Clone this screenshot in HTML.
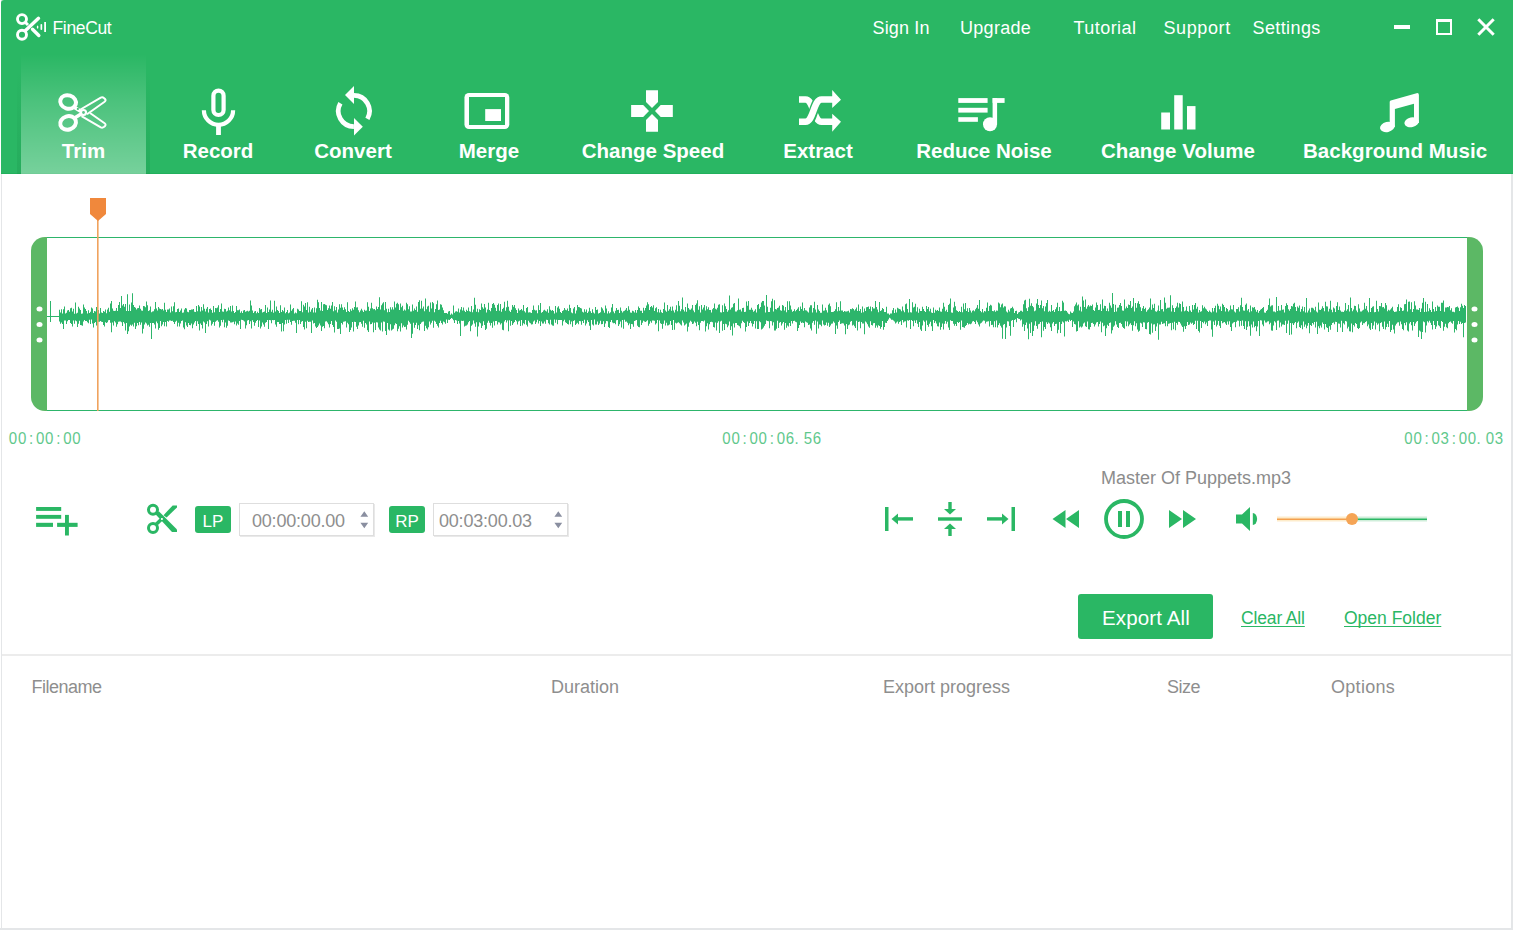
<!DOCTYPE html>
<html><head><meta charset="utf-8"><style>
*{box-sizing:border-box}
html,body{margin:0;padding:0}
body{width:1513px;height:930px;position:relative;overflow:hidden;background:#fff;font-family:"Liberation Sans",sans-serif}
.a{position:absolute}
.tx{white-space:nowrap}
.ts{font-size:15px;color:#5fc88c;line-height:16px;top:429px;white-space:nowrap;transform:scaleY(1.14);transform-origin:0 0}
svg{display:block}
</style></head><body>
<div class="a" style="left:1px;top:0;width:1px;height:930px;background:#e4e6e8"></div>
<div class="a" style="left:1511px;top:174px;width:2px;height:756px;background:#e4e6e8"></div>
<div class="a" style="left:0;top:928px;width:1513px;height:2px;background:#e4e6e8"></div>

<div class="a" style="left:1px;top:0;width:1512px;height:174px;background:#2ab764;border-top-left-radius:3px"></div>
<div class="a" style="left:1px;top:173px;width:1512px;height:1px;background:#22b05c"></div>
<div class="a" style="left:17px;top:70px;width:4px;height:104px;background:linear-gradient(180deg,rgba(0,80,30,0),rgba(0,80,30,.10))"></div>
<div class="a" style="left:146px;top:70px;width:4px;height:104px;background:linear-gradient(180deg,rgba(0,80,30,0),rgba(0,80,30,.10))"></div>
<div class="a" style="left:21px;top:54px;width:125px;height:120px;background:linear-gradient(180deg,rgba(255,255,255,0) 0%,rgba(255,255,255,.16) 40%,rgba(255,255,255,.36) 100%)"></div>

<!-- logo -->
<svg class="a" style="left:12px;top:10px" width="40" height="34" viewBox="0 0 40 34">
 <g fill="none" stroke="#fff" stroke-width="2.9">
  <circle cx="10" cy="9.1" r="4.5"/><circle cx="10" cy="24.8" r="4.5"/>
 </g>
 <g stroke="#fff" stroke-width="3.4" stroke-linecap="round" fill="none">
  <path d="M13.5 20.5L26.5 8.3"/><path d="M20.5 19.3L26.8 25.5"/>
 </g>
 <path d="M13.5 12.5L16 15" stroke="#fff" stroke-width="3" fill="none"/>
 <g fill="#fff"><ellipse cx="25.6" cy="17.1" rx="0.8" ry="1.7"/><rect x="28.5" y="14" width="1.7" height="6" rx=".8"/><rect x="32.2" y="12" width="1.8" height="10"/></g>
</svg>
<div class="a tx" style="left:52.5px;top:20.19px;font-size:17.5px;line-height:17.5px;color:#fff;letter-spacing:-0.35px;">FineCut</div>

<div class="a tx" style="left:872.5px;top:18.76px;font-size:18px;line-height:18px;color:#fff;letter-spacing:0.15px;">Sign In</div>
<div class="a tx" style="left:960px;top:18.76px;font-size:18px;line-height:18px;color:#fff;letter-spacing:0.3px;">Upgrade</div>
<div class="a tx" style="left:1073.5px;top:18.76px;font-size:18px;line-height:18px;color:#fff;letter-spacing:0.45px;">Tutorial</div>
<div class="a tx" style="left:1163.5px;top:18.76px;font-size:18px;line-height:18px;color:#fff;letter-spacing:0.6px;">Support</div>
<div class="a tx" style="left:1252.5px;top:18.76px;font-size:18px;line-height:18px;color:#fff;letter-spacing:0.4px;">Settings</div>

<!-- window controls -->
<div class="a" style="left:1394px;top:25px;width:16px;height:4px;background:#fff"></div>
<div class="a" style="left:1436px;top:19px;width:16px;height:16px;border:2px solid #fff;border-top-width:3px"></div>
<svg class="a" style="left:1476px;top:17px" width="20" height="20" viewBox="0 0 20 20"><path d="M2.3 2.3L17.7 17.7M17.7 2.3L2.3 17.7" stroke="#fff" stroke-width="3"/></svg>

<div class="a tx" style="left:21.0px;top:140.65px;font-size:20.5px;line-height:20.5px;color:#fff;font-weight:bold;width:125px;text-align:center;">Trim</div><div class="a tx" style="left:148.0px;top:140.65px;font-size:20.5px;line-height:20.5px;color:#fff;font-weight:bold;width:140px;text-align:center;">Record</div><div class="a tx" style="left:283.0px;top:140.65px;font-size:20.5px;line-height:20.5px;color:#fff;font-weight:bold;width:140px;text-align:center;">Convert</div><div class="a tx" style="left:419.0px;top:140.65px;font-size:20.5px;line-height:20.5px;color:#fff;font-weight:bold;width:140px;text-align:center;">Merge</div><div class="a tx" style="left:543.0px;top:140.65px;font-size:20.5px;line-height:20.5px;color:#fff;font-weight:bold;width:220px;text-align:center;">Change Speed</div><div class="a tx" style="left:748.0px;top:140.65px;font-size:20.5px;line-height:20.5px;color:#fff;font-weight:bold;width:140px;text-align:center;">Extract</div><div class="a tx" style="left:874.0px;top:140.65px;font-size:20.5px;line-height:20.5px;color:#fff;font-weight:bold;width:220px;text-align:center;">Reduce Noise</div><div class="a tx" style="left:1068.0px;top:140.65px;font-size:20.5px;line-height:20.5px;color:#fff;font-weight:bold;width:220px;text-align:center;letter-spacing:0.05px;">Change Volume</div><div class="a tx" style="left:1285.0px;top:140.65px;font-size:20.5px;line-height:20.5px;color:#fff;font-weight:bold;width:220px;text-align:center;letter-spacing:0.05px;">Background Music</div>

<!-- trim scissors -->
<svg class="a" style="left:52px;top:88px" width="60" height="48" viewBox="0 0 60 48">
 <g fill="none" stroke="#fff">
  <ellipse cx="16.1" cy="14" rx="8" ry="6.7" stroke-width="4" transform="rotate(18 16.1 14)"/>
  <ellipse cx="16.1" cy="34.9" rx="8" ry="6.7" stroke-width="4" transform="rotate(-18 16.1 34.9)"/>
  <path d="M22.5 19.5L31.5 25M22.5 30L31.5 24.5" stroke-width="3.6"/>
  <path d="M28.5 21.5L48.8 9.6Q50.5 8.8 52.2 10.2L53 11Q54.3 12.5 52.6 13.7L35 26.2" stroke-width="2" stroke-linejoin="round"/>
  <path d="M29.5 28.2L48.8 39.4Q50.5 40.2 52.2 38.8L53 38Q54.3 36.5 52.6 35.3L38 25" stroke-width="2" stroke-linejoin="round"/>
 </g>
 <circle cx="31.5" cy="24.5" r="3.6" fill="#fff"/>
 <circle cx="31.5" cy="24.5" r="1.4" fill="#5cc689"/>
 <rect x="24.9" y="20" width="1.9" height="1.9" fill="#4fc07e"/>
</svg>
<!-- mic -->
<svg class="a" style="left:195px;top:84px" width="50" height="56" viewBox="0 0 50 56">
 <g fill="none" stroke="#fff" stroke-width="4.2">
  <rect x="18.4" y="6.6" width="10.2" height="24.4" rx="5.1"/>
  <path d="M8.9 26.2A14.6 14.6 0 0 0 38.1 26.2"/>
 </g>
 <rect x="21.1" y="40" width="4.8" height="11" fill="#fff"/>
</svg>
<!-- convert -->
<svg class="a" style="left:330px;top:82px" width="50" height="58" viewBox="0 0 50 58">
 <g fill="none" stroke="#fff" stroke-width="4.7">
  <path d="M23.9 13.4A15.6 15.6 0 0 1 37.4 36.8"/>
  <path d="M23.9 44.6A15.6 15.6 0 0 1 10.4 21.2"/>
 </g>
 <path d="M24 4V22L15 13Z" fill="#fff"/>
 <path d="M24 36V53.5L32.8 44.7Z" fill="#fff"/>
</svg>
<!-- merge -->
<svg class="a" style="left:458px;top:86px" width="60" height="50" viewBox="0 0 60 50">
 <rect x="6.45" y="7" width="44.85" height="36" rx="4.5" fill="#fff"/>
 <rect x="11" y="11" width="36" height="28" fill="#2ab764"/>
 <rect x="27.2" y="23.1" width="15.8" height="11.9" fill="#fff"/>
</svg>
<!-- change speed -->
<svg class="a" style="left:626px;top:86px" width="52" height="50" viewBox="0 0 52 50">
 <g fill="#fff">
  <path d="M20 4.2H32V16L26 21.9L20 16Z"/>
  <path d="M20 45.7H32V33.9L26 28L20 33.9Z"/>
  <path d="M5.1 19V31H17.2L23 25L17.2 19Z"/>
  <path d="M46.8 19V31H34.7L29 25L34.7 19Z"/>
 </g>
</svg>
<!-- extract -->
<svg class="a" style="left:794px;top:86px" width="52" height="50" viewBox="0 0 52 50">
 <path d="M5 13.5H11.5C19.5 13.5 19.5 35.8 27.5 35.8H39" fill="none" stroke="#fff" stroke-width="6.6"/>
 <path d="M13 35.8C19.5 35.8 19.5 13.5 27.5 13.5" fill="none" stroke="#2ab764" stroke-width="9.5"/>
 <path d="M5 35.8H11.5C19.5 35.8 19.5 13.5 27.5 13.5H39" fill="none" stroke="#fff" stroke-width="6.6"/>
 <path d="M38.2 4L47 13.7L38.2 22Z M38.2 27.7L47 35.8L38.2 45.7Z" fill="#fff"/>
</svg>
<!-- reduce noise -->
<svg class="a" style="left:954px;top:92px" width="56" height="44" viewBox="0 0 56 44">
 <g fill="#fff">
  <rect x="4.3" y="6.1" width="29.3" height="4.8"/>
  <rect x="4.3" y="15.8" width="29.3" height="4.8"/>
  <rect x="4.3" y="25.2" width="19.6" height="4.6"/>
  <rect x="38.6" y="6.1" width="4.5" height="26.5"/>
  <rect x="38.6" y="6.1" width="12" height="4.8"/>
  <circle cx="36" cy="32.3" r="7"/>
 </g>
</svg>
<!-- change volume -->
<svg class="a" style="left:1156px;top:90px" width="46" height="44" viewBox="0 0 46 44">
 <g fill="#fff"><rect x="5.2" y="22.5" width="8.8" height="17"/><rect x="18.2" y="5.2" width="8.5" height="34.3"/><rect x="31" y="16.1" width="8.5" height="23.4"/></g>
</svg>
<!-- music -->
<svg class="a" style="left:1374px;top:88px" width="50" height="48" viewBox="0 0 50 48">
 <g fill="#fff">
  <path d="M15.7 14Q15.7 12.9 16.8 12.5L42.6 5.2Q44.9 4.7 44.9 7V35H40V15.7L20.9 21V39H15.7Z"/>
  <ellipse cx="13.3" cy="39" rx="7.4" ry="5" transform="rotate(-12 13.3 39)"/>
  <ellipse cx="37.6" cy="34.2" rx="7.3" ry="4.9" transform="rotate(-12 37.6 34.2)"/>
 </g>
</svg>

<!-- waveform area -->
<div class="a" style="left:46px;top:237px;width:1422px;height:174px;border-top:1px solid #2db56b;border-bottom:1px solid #2db56b"></div>
<div class="a" style="left:31px;top:237px;width:16px;height:174px;background:#5cb865;border-radius:14px 0 0 14px"></div>
<div class="a" style="left:1467px;top:237px;width:16px;height:174px;background:#5cb865;border-radius:0 14px 14px 0"></div>
<svg class="a" style="left:0;top:0" width="1513" height="930">
 <g fill="#fff">
  <ellipse cx="39.5" cy="309" rx="3" ry="2.5"/><ellipse cx="39.5" cy="324.5" rx="3" ry="2.5"/><ellipse cx="39.5" cy="340" rx="3" ry="2.5"/>
  <ellipse cx="1474.5" cy="309" rx="3" ry="2.5"/><ellipse cx="1474.5" cy="324.5" rx="3" ry="2.5"/><ellipse cx="1474.5" cy="340" rx="3" ry="2.5"/>
 </g>
 <path d="M50.5 301V322" stroke="#2db56b" stroke-width="1"/>
 <path d="M47 315.9H59L59 309.7L60 309.7L60 312.5L61 312.5L61 309.3L62 309.3L62 313.5L63 313.5L63 309.2L64 309.2L64 306.6L65 306.6L65 313.4L66 313.4L66 312.8L67 312.8L67 310.6L68 310.6L68 309.9L69 309.9L69 311.7L70 311.7L70 308.3L71 308.3L71 307.7L72 307.7L72 311.4L73 311.4L73 308.8L74 308.8L74 313.7L75 313.7L75 302.6L76 302.6L76 313.6L77 313.6L77 312.8L78 312.8L78 306.7L79 306.7L79 308.4L80 308.4L80 309.9L81 309.9L81 313.7L82 313.7L82 313.6L83 313.6L83 304.4L84 304.4L84 307.4L85 307.4L85 308.9L86 308.9L86 311.1L87 311.1L87 313.6L88 313.6L88 310.3L89 310.3L89 313.1L90 313.1L90 311.7L91 311.7L91 307.4L92 307.4L92 308.5L93 308.5L93 313.1L94 313.1L94 311.1L95 311.1L95 311.4L96 311.4L96 307.1L97 307.1L97 305.6L98 305.6L98 309.9L99 309.9L99 313.4L100 313.4L100 308.0L101 308.0L101 312.4L102 312.4L102 313.1L103 313.1L103 311.1L104 311.1L104 311.8L105 311.8L105 309.4L106 309.4L106 313.3L107 313.3L107 309.6L108 309.6L108 307.7L109 307.7L109 311.7L110 311.7L110 303.5L111 303.5L111 301.0L112 301.0L112 308.4L113 308.4L113 310.7L114 310.7L114 311.0L115 311.0L115 310.7L116 310.7L116 307.9L117 307.9L117 311.0L118 311.0L118 305.0L119 305.0L119 302.0L120 302.0L120 308.1L121 308.1L121 296.1L122 296.1L122 305.5L123 305.5L123 304.0L124 304.0L124 306.8L125 306.8L125 304.1L126 304.1L126 311.0L127 311.0L127 294.2L128 294.2L128 310.9L129 310.9L129 304.4L130 304.4L130 311.0L131 311.0L131 302.6L132 302.6L132 293.3L133 293.3L133 304.9L134 304.9L134 306.9L135 306.9L135 307.8L136 307.8L136 309.5L137 309.5L137 308.3L138 308.3L138 308.1L139 308.1L139 305.4L140 305.4L140 308.8L141 308.8L141 310.4L142 310.4L142 310.8L143 310.8L143 305.9L144 305.9L144 306.3L145 306.3L145 307.2L146 307.2L146 301.4L147 301.4L147 305.2L148 305.2L148 310.9L149 310.9L149 310.2L150 310.2L150 306.4L151 306.4L151 312.2L152 312.2L152 311.4L153 311.4L153 311.3L154 311.3L154 309.2L155 309.2L155 302.1L156 302.1L156 308.4L157 308.4L157 310.5L158 310.5L158 307.1L159 307.1L159 308.6L160 308.6L160 308.9L161 308.9L161 309.6L162 309.6L162 309.1L163 309.1L163 310.4L164 310.4L164 302.8L165 302.8L165 309.7L166 309.7L166 311.9L167 311.9L167 309.5L168 309.5L168 309.5L169 309.5L169 308.4L170 308.4L170 312.5L171 312.5L171 306.6L172 306.6L172 311.3L173 311.3L173 306.3L174 306.3L174 302.2L175 302.2L175 312.2L176 312.2L176 312.0L177 312.0L177 308.9L178 308.9L178 308.6L179 308.6L179 312.0L180 312.0L180 310.6L181 310.6L181 308.4L182 308.4L182 312.8L183 312.8L183 312.6L184 312.6L184 309.4L185 309.4L185 307.9L186 307.9L186 308.6L187 308.6L187 311.7L188 311.7L188 312.2L189 312.2L189 310.1L190 310.1L190 309.9L191 309.9L191 309.4L192 309.4L192 309.5L193 309.5L193 309.0L194 309.0L194 311.7L195 311.7L195 311.9L196 311.9L196 305.9L197 305.9L197 311.3L198 311.3L198 304.9L199 304.9L199 306.4L200 306.4L200 311.6L201 311.6L201 307.0L202 307.0L202 310.4L203 310.4L203 304.2L204 304.2L204 308.8L205 308.8L205 311.6L206 311.6L206 308.8L207 308.8L207 307.1L208 307.1L208 312.6L209 312.6L209 309.0L210 309.0L210 308.5L211 308.5L211 310.1L212 310.1L212 312.8L213 312.8L213 306.0L214 306.0L214 312.3L215 312.3L215 307.9L216 307.9L216 308.3L217 308.3L217 307.4L218 307.4L218 305.2L219 305.2L219 311.9L220 311.9L220 308.9L221 308.9L221 303.5L222 303.5L222 311.6L223 311.6L223 311.8L224 311.8L224 308.8L225 308.8L225 309.1L226 309.1L226 311.5L227 311.5L227 310.7L228 310.7L228 307.5L229 307.5L229 310.2L230 310.2L230 306.0L231 306.0L231 311.5L232 311.5L232 305.6L233 305.6L233 311.0L234 311.0L234 313.1L235 313.1L235 311.9L236 311.9L236 305.9L237 305.9L237 310.2L238 310.2L238 310.3L239 310.3L239 309.5L240 309.5L240 312.7L241 312.7L241 311.3L242 311.3L242 313.0L243 313.0L243 310.5L244 310.5L244 310.0L245 310.0L245 311.8L246 311.8L246 311.3L247 311.3L247 310.8L248 310.8L248 311.6L249 311.6L249 310.8L250 310.8L250 300.5L251 300.5L251 305.4L252 305.4L252 310.6L253 310.6L253 313.0L254 313.0L254 311.6L255 311.6L255 311.0L256 311.0L256 313.2L257 313.2L257 311.7L258 311.7L258 313.1L259 313.1L259 307.9L260 307.9L260 309.5L261 309.5L261 308.9L262 308.9L262 312.4L263 312.4L263 312.0L264 312.0L264 311.6L265 311.6L265 305.1L266 305.1L266 312.9L267 312.9L267 307.4L268 307.4L268 312.0L269 312.0L269 309.6L270 309.6L270 300.6L271 300.6L271 311.8L272 311.8L272 309.8L273 309.8L273 312.7L274 312.7L274 300.8L275 300.8L275 311.4L276 311.4L276 306.4L277 306.4L277 309.9L278 309.9L278 310.9L279 310.9L279 313.0L280 313.0L280 305.3L281 305.3L281 311.9L282 311.9L282 310.0L283 310.0L283 311.3L284 311.3L284 307.5L285 307.5L285 313.2L286 313.2L286 312.0L287 312.0L287 309.9L288 309.9L288 313.2L289 313.2L289 312.4L290 312.4L290 304.5L291 304.5L291 310.8L292 310.8L292 309.3L293 309.3L293 308.0L294 308.0L294 313.4L295 313.4L295 312.6L296 312.6L296 313.3L297 313.3L297 308.8L298 308.8L298 309.6L299 309.6L299 311.0L300 311.0L300 310.9L301 310.9L301 301.2L302 301.2L302 312.2L303 312.2L303 304.7L304 304.7L304 306.6L305 306.6L305 302.9L306 302.9L306 309.9L307 309.9L307 302.2L308 302.2L308 312.6L309 312.6L309 306.8L310 306.8L310 311.7L311 311.7L311 309.5L312 309.5L312 307.9L313 307.9L313 312.5L314 312.5L314 307.5L315 307.5L315 312.6L316 312.6L316 308.2L317 308.2L317 299.7L318 299.7L318 302.2L319 302.2L319 308.0L320 308.0L320 310.5L321 310.5L321 302.0L322 302.0L322 311.1L323 311.1L323 304.3L324 304.3L324 304.1L325 304.1L325 304.7L326 304.7L326 305.3L327 305.3L327 310.1L328 310.1L328 308.2L329 308.2L329 305.6L330 305.6L330 308.7L331 308.7L331 305.4L332 305.4L332 302.0L333 302.0L333 311.2L334 311.2L334 306.2L335 306.2L335 310.2L336 310.2L336 307.0L337 307.0L337 312.5L338 312.5L338 309.5L339 309.5L339 304.2L340 304.2L340 307.7L341 307.7L341 304.3L342 304.3L342 307.6L343 307.6L343 309.9L344 309.9L344 307.2L345 307.2L345 309.3L346 309.3L346 312.1L347 312.1L347 302.3L348 302.3L348 310.9L349 310.9L349 312.1L350 312.1L350 309.2L351 309.2L351 310.8L352 310.8L352 308.2L353 308.2L353 309.7L354 309.7L354 307.1L355 307.1L355 301.6L356 301.6L356 307.4L357 307.4L357 307.3L358 307.3L358 310.3L359 310.3L359 312.2L360 312.2L360 310.5L361 310.5L361 308.8L362 308.8L362 310.4L363 310.4L363 311.9L364 311.9L364 309.8L365 309.8L365 310.8L366 310.8L366 310.6L367 310.6L367 302.2L368 302.2L368 306.7L369 306.7L369 311.0L370 311.0L370 308.4L371 308.4L371 302.8L372 302.8L372 308.2L373 308.2L373 309.3L374 309.3L374 308.9L375 308.9L375 310.2L376 310.2L376 306.4L377 306.4L377 309.1L378 309.1L378 306.9L379 306.9L379 297.2L380 297.2L380 309.6L381 309.6L381 305.3L382 305.3L382 303.6L383 303.6L383 302.2L384 302.2L384 310.3L385 310.3L385 302.1L386 302.1L386 308.8L387 308.8L387 312.3L388 312.3L388 308.8L389 308.8L389 311.9L390 311.9L390 307.3L391 307.3L391 309.6L392 309.6L392 307.2L393 307.2L393 309.4L394 309.4L394 301.6L395 301.6L395 307.4L396 307.4L396 303.8L397 303.8L397 302.7L398 302.7L398 304.2L399 304.2L399 310.1L400 310.1L400 303.6L401 303.6L401 307.3L402 307.3L402 305.8L403 305.8L403 310.7L404 310.7L404 309.4L405 309.4L405 310.6L406 310.6L406 302.8L407 302.8L407 304.2L408 304.2L408 309.2L409 309.2L409 306.3L410 306.3L410 311.6L411 311.6L411 311.6L412 311.6L412 304.4L413 304.4L413 310.7L414 310.7L414 308.6L415 308.6L415 310.0L416 310.0L416 306.5L417 306.5L417 311.7L418 311.7L418 301.9L419 301.9L419 300.3L420 300.3L420 308.7L421 308.7L421 300.8L422 300.8L422 308.6L423 308.6L423 306.4L424 306.4L424 311.3L425 311.3L425 298.5L426 298.5L426 309.3L427 309.3L427 306.6L428 306.6L428 305.8L429 305.8L429 311.8L430 311.8L430 302.4L431 302.4L431 308.5L432 308.5L432 302.1L433 302.1L433 303.2L434 303.2L434 312.3L435 312.3L435 309.0L436 309.0L436 304.3L437 304.3L437 300.4L438 300.4L438 310.0L439 310.0L439 309.6L440 309.6L440 304.3L441 304.3L441 304.7L442 304.7L442 307.5L443 307.5L443 310.3L444 310.3L444 312.9L445 312.9L445 313.1L446 313.1L446 312.9L447 312.9L447 313.8L448 313.8L448 311.5L449 311.5L449 310.9L450 310.9L450 314.8L451 314.8L451 313.5L452 313.5L452 314.6L453 314.6L453 305.6L454 305.6L454 312.7L455 312.7L455 311.5L456 311.5L456 311.2L457 311.2L457 311.8L458 311.8L458 308.5L459 308.5L459 312.5L460 312.5L460 309.4L461 309.4L461 306.9L462 306.9L462 310.6L463 310.6L463 307.6L464 307.6L464 310.8L465 310.8L465 311.9L466 311.9L466 309.8L467 309.8L467 311.0L468 311.0L468 307.5L469 307.5L469 311.2L470 311.2L470 311.7L471 311.7L471 306.0L472 306.0L472 312.2L473 312.2L473 309.6L474 309.6L474 297.7L475 297.7L475 304.7L476 304.7L476 311.8L477 311.8L477 308.7L478 308.7L478 312.3L479 312.3L479 309.3L480 309.3L480 310.0L481 310.0L481 303.4L482 303.4L482 307.3L483 307.3L483 308.8L484 308.8L484 303.9L485 303.9L485 307.5L486 307.5L486 312.4L487 312.4L487 309.4L488 309.4L488 302.8L489 302.8L489 310.0L490 310.0L490 311.2L491 311.2L491 308.1L492 308.1L492 304.1L493 304.1L493 302.9L494 302.9L494 304.7L495 304.7L495 307.8L496 307.8L496 310.9L497 310.9L497 305.0L498 305.0L498 303.6L499 303.6L499 310.8L500 310.8L500 304.1L501 304.1L501 311.7L502 311.7L502 308.9L503 308.9L503 307.7L504 307.7L504 301.8L505 301.8L505 310.8L506 310.8L506 307.2L507 307.2L507 300.8L508 300.8L508 306.8L509 306.8L509 310.7L510 310.7L510 312.0L511 312.0L511 309.7L512 309.7L512 305.1L513 305.1L513 306.7L514 306.7L514 304.9L515 304.9L515 308.3L516 308.3L516 310.1L517 310.1L517 313.1L518 313.1L518 308.5L519 308.5L519 310.6L520 310.6L520 309.9L521 309.9L521 309.1L522 309.1L522 310.4L523 310.4L523 305.1L524 305.1L524 311.2L525 311.2L525 312.6L526 312.6L526 307.9L527 307.9L527 306.9L528 306.9L528 312.4L529 312.4L529 312.2L530 312.2L530 312.5L531 312.5L531 313.0L532 313.0L532 309.9L533 309.9L533 305.5L534 305.5L534 309.7L535 309.7L535 310.6L536 310.6L536 310.3L537 310.3L537 313.2L538 313.2L538 305.2L539 305.2L539 309.9L540 309.9L540 303.1L541 303.1L541 312.7L542 312.7L542 312.1L543 312.1L543 310.5L544 310.5L544 309.7L545 309.7L545 310.8L546 310.8L546 311.5L547 311.5L547 309.2L548 309.2L548 312.8L549 312.8L549 306.3L550 306.3L550 309.7L551 309.7L551 310.8L552 310.8L552 310.1L553 310.1L553 310.9L554 310.9L554 313.4L555 313.4L555 305.9L556 305.9L556 312.6L557 312.6L557 307.4L558 307.4L558 306.2L559 306.2L559 308.8L560 308.8L560 311.9L561 311.9L561 312.9L562 312.9L562 311.1L563 311.1L563 310.2L564 310.2L564 307.9L565 307.9L565 309.8L566 309.8L566 310.2L567 310.2L567 308.6L568 308.6L568 311.1L569 311.1L569 304.7L570 304.7L570 307.9L571 307.9L571 312.4L572 312.4L572 313.3L573 313.3L573 308.6L574 308.6L574 307.0L575 307.0L575 313.4L576 313.4L576 310.6L577 310.6L577 304.9L578 304.9L578 307.0L579 307.0L579 307.3L580 307.3L580 308.0L581 308.0L581 308.6L582 308.6L582 311.7L583 311.7L583 312.6L584 312.6L584 309.3L585 309.3L585 311.8L586 311.8L586 309.5L587 309.5L587 313.1L588 313.1L588 311.4L589 311.4L589 307.7L590 307.7L590 311.2L591 311.2L591 313.1L592 313.1L592 309.3L593 309.3L593 312.5L594 312.5L594 313.5L595 313.5L595 306.9L596 306.9L596 310.1L597 310.1L597 309.6L598 309.6L598 313.4L599 313.4L599 313.1L600 313.1L600 312.2L601 312.2L601 307.3L602 307.3L602 308.5L603 308.5L603 310.4L604 310.4L604 312.7L605 312.7L605 305.6L606 305.6L606 308.6L607 308.6L607 313.4L608 313.4L608 311.3L609 311.3L609 313.2L610 313.2L610 312.2L611 312.2L611 307.4L612 307.4L612 303.9L613 303.9L613 311.4L614 311.4L614 313.3L615 313.3L615 310.8L616 310.8L616 307.9L617 307.9L617 309.9L618 309.9L618 309.7L619 309.7L619 312.9L620 312.9L620 307.4L621 307.4L621 310.8L622 310.8L622 312.5L623 312.5L623 311.2L624 311.2L624 310.8L625 310.8L625 309.7L626 309.7L626 308.0L627 308.0L627 310.8L628 310.8L628 306.3L629 306.3L629 309.7L630 309.7L630 312.5L631 312.5L631 312.8L632 312.8L632 310.8L633 310.8L633 311.2L634 311.2L634 312.6L635 312.6L635 310.1L636 310.1L636 312.7L637 312.7L637 310.0L638 310.0L638 306.4L639 306.4L639 308.0L640 308.0L640 310.7L641 310.7L641 310.8L642 310.8L642 313.0L643 313.0L643 307.8L644 307.8L644 310.4L645 310.4L645 308.0L646 308.0L646 305.6L647 305.6L647 302.2L648 302.2L648 304.3L649 304.3L649 310.1L650 310.1L650 307.1L651 307.1L651 306.0L652 306.0L652 307.6L653 307.6L653 305.2L654 305.2L654 310.9L655 310.9L655 308.2L656 308.2L656 307.2L657 307.2L657 312.2L658 312.2L658 309.1L659 309.1L659 312.6L660 312.6L660 309.8L661 309.8L661 312.2L662 312.2L662 312.9L663 312.9L663 309.1L664 309.1L664 302.6L665 302.6L665 310.6L666 310.6L666 311.7L667 311.7L667 305.0L668 305.0L668 310.7L669 310.7L669 309.3L670 309.3L670 306.8L671 306.8L671 310.7L672 310.7L672 306.6L673 306.6L673 310.5L674 310.5L674 312.6L675 312.6L675 309.8L676 309.8L676 305.3L677 305.3L677 311.3L678 311.3L678 301.1L679 301.1L679 305.8L680 305.8L680 311.3L681 311.3L681 309.2L682 309.2L682 297.5L683 297.5L683 309.8L684 309.8L684 311.6L685 311.6L685 307.0L686 307.0L686 311.7L687 311.7L687 303.6L688 303.6L688 308.1L689 308.1L689 309.6L690 309.6L690 309.7L691 309.7L691 308.5L692 308.5L692 304.9L693 304.9L693 310.5L694 310.5L694 312.3L695 312.3L695 305.0L696 305.0L696 303.4L697 303.4L697 300.2L698 300.2L698 309.8L699 309.8L699 306.3L700 306.3L700 312.5L701 312.5L701 304.9L702 304.9L702 309.6L703 309.6L703 307.4L704 307.4L704 305.0L705 305.0L705 310.4L706 310.4L706 306.2L707 306.2L707 309.3L708 309.3L708 307.3L709 307.3L709 310.1L710 310.1L710 310.0L711 310.0L711 312.4L712 312.4L712 309.2L713 309.2L713 308.0L714 308.0L714 303.5L715 303.5L715 308.8L716 308.8L716 309.4L717 309.4L717 307.8L718 307.8L718 304.7L719 304.7L719 304.3L720 304.3L720 312.3L721 312.3L721 312.6L722 312.6L722 305.2L723 305.2L723 312.1L724 312.1L724 303.6L725 303.6L725 306.2L726 306.2L726 309.1L727 309.1L727 311.8L728 311.8L728 310.3L729 310.3L729 295.4L730 295.4L730 309.6L731 309.6L731 307.8L732 307.8L732 307.2L733 307.2L733 303.8L734 303.8L734 303.1L735 303.1L735 311.5L736 311.5L736 311.6L737 311.6L737 310.2L738 310.2L738 298.5L739 298.5L739 309.7L740 309.7L740 309.6L741 309.6L741 311.6L742 311.6L742 307.9L743 307.9L743 307.8L744 307.8L744 312.0L745 312.0L745 311.7L746 311.7L746 301.4L747 301.4L747 305.8L748 305.8L748 300.9L749 300.9L749 309.8L750 309.8L750 309.8L751 309.8L751 307.7L752 307.7L752 309.8L753 309.8L753 311.8L754 311.8L754 310.7L755 310.7L755 309.3L756 309.3L756 312.5L757 312.5L757 305.1L758 305.1L758 304.1L759 304.1L759 308.8L760 308.8L760 306.9L761 306.9L761 302.4L762 302.4L762 300.9L763 300.9L763 301.0L764 301.0L764 305.5L765 305.5L765 312.4L766 312.4L766 294.9L767 294.9L767 306.7L768 306.7L768 312.1L769 312.1L769 312.1L770 312.1L770 307.7L771 307.7L771 301.3L772 301.3L772 298.7L773 298.7L773 311.5L774 311.5L774 300.3L775 300.3L775 309.1L776 309.1L776 309.6L777 309.6L777 308.1L778 308.1L778 307.5L779 307.5L779 305.8L780 305.8L780 310.2L781 310.2L781 310.7L782 310.7L782 305.0L783 305.0L783 305.7L784 305.7L784 310.6L785 310.6L785 307.0L786 307.0L786 312.3L787 312.3L787 301.2L788 301.2L788 309.9L789 309.9L789 301.2L790 301.2L790 305.5L791 305.5L791 309.4L792 309.4L792 311.8L793 311.8L793 311.0L794 311.0L794 309.3L795 309.3L795 311.3L796 311.3L796 310.0L797 310.0L797 308.7L798 308.7L798 307.3L799 307.3L799 311.1L800 311.1L800 306.4L801 306.4L801 308.9L802 308.9L802 302.5L803 302.5L803 310.8L804 310.8L804 307.9L805 307.9L805 310.2L806 310.2L806 310.5L807 310.5L807 311.5L808 311.5L808 312.6L809 312.6L809 307.6L810 307.6L810 305.2L811 305.2L811 305.2L812 305.2L812 312.4L813 312.4L813 308.1L814 308.1L814 301.7L815 301.7L815 309.4L816 309.4L816 312.6L817 312.6L817 304.9L818 304.9L818 309.5L819 309.5L819 311.1L820 311.1L820 312.7L821 312.7L821 312.7L822 312.7L822 304.6L823 304.6L823 310.8L824 310.8L824 310.6L825 310.6L825 307.7L826 307.7L826 310.3L827 310.3L827 312.4L828 312.4L828 304.8L829 304.8L829 303.6L830 303.6L830 306.3L831 306.3L831 311.9L832 311.9L832 312.1L833 312.1L833 311.7L834 311.7L834 311.0L835 311.0L835 309.3L836 309.3L836 302.3L837 302.3L837 311.2L838 311.2L838 307.0L839 307.0L839 310.8L840 310.8L840 301.2L841 301.2L841 310.5L842 310.5L842 310.4L843 310.4L843 312.0L844 312.0L844 310.9L845 310.9L845 311.5L846 311.5L846 311.4L847 311.4L847 311.2L848 311.2L848 310.7L849 310.7L849 312.6L850 312.6L850 308.9L851 308.9L851 309.3L852 309.3L852 308.2L853 308.2L853 309.0L854 309.0L854 310.4L855 310.4L855 309.2L856 309.2L856 307.6L857 307.6L857 311.1L858 311.1L858 304.6L859 304.6L859 311.0L860 311.0L860 308.9L861 308.9L861 312.8L862 312.8L862 306.5L863 306.5L863 312.2L864 312.2L864 308.6L865 308.6L865 310.9L866 310.9L866 307.2L867 307.2L867 307.1L868 307.1L868 306.5L869 306.5L869 308.9L870 308.9L870 306.6L871 306.6L871 311.3L872 311.3L872 307.0L873 307.0L873 308.4L874 308.4L874 308.4L875 308.4L875 301.0L876 301.0L876 307.1L877 307.1L877 309.6L878 309.6L878 312.3L879 312.3L879 302.0L880 302.0L880 311.0L881 311.0L881 310.3L882 310.3L882 307.9L883 307.9L883 308.9L884 308.9L884 311.9L885 311.9L885 312.1L886 312.1L886 306.8L887 306.8L887 313.5L888 313.5L888 313.5L889 313.5L889 314.8L890 314.8L890 313.5L891 313.5L891 313.6L892 313.6L892 310.3L893 310.3L893 308.0L894 308.0L894 312.9L895 312.9L895 309.4L896 309.4L896 312.6L897 312.6L897 307.7L898 307.7L898 308.5L899 308.5L899 308.9L900 308.9L900 309.4L901 309.4L901 311.2L902 311.2L902 306.4L903 306.4L903 310.5L904 310.5L904 312.2L905 312.2L905 304.2L906 304.2L906 303.4L907 303.4L907 309.0L908 309.0L908 312.5L909 312.5L909 299.1L910 299.1L910 312.2L911 312.2L911 312.6L912 312.6L912 302.2L913 302.2L913 307.4L914 307.4L914 306.8L915 306.8L915 303.7L916 303.7L916 311.6L917 311.6L917 307.2L918 307.2L918 312.7L919 312.7L919 308.7L920 308.7L920 311.1L921 311.1L921 311.1L922 311.1L922 306.7L923 306.7L923 308.9L924 308.9L924 311.1L925 311.1L925 311.9L926 311.9L926 306.0L927 306.0L927 309.1L928 309.1L928 307.0L929 307.0L929 311.2L930 311.2L930 308.7L931 308.7L931 312.5L932 312.5L932 313.0L933 313.0L933 307.5L934 307.5L934 312.8L935 312.8L935 309.8L936 309.8L936 310.7L937 310.7L937 310.0L938 310.0L938 311.1L939 311.1L939 307.6L940 307.6L940 311.6L941 311.6L941 311.8L942 311.8L942 308.8L943 308.8L943 302.8L944 302.8L944 306.8L945 306.8L945 311.2L946 311.2L946 309.7L947 309.7L947 312.1L948 312.1L948 305.0L949 305.0L949 303.7L950 303.7L950 298.6L951 298.6L951 312.6L952 312.6L952 312.7L953 312.7L953 307.6L954 307.6L954 301.7L955 301.7L955 306.2L956 306.2L956 310.3L957 310.3L957 310.9L958 310.9L958 312.1L959 312.1L959 310.9L960 310.9L960 311.9L961 311.9L961 306.8L962 306.8L962 312.2L963 312.2L963 303.6L964 303.6L964 309.2L965 309.2L965 302.9L966 302.9L966 310.9L967 310.9L967 308.2L968 308.2L968 311.9L969 311.9L969 308.1L970 308.1L970 310.5L971 310.5L971 312.4L972 312.4L972 310.7L973 310.7L973 310.2L974 310.2L974 311.2L975 311.2L975 309.2L976 309.2L976 307.8L977 307.8L977 304.9L978 304.9L978 308.8L979 308.8L979 299.9L980 299.9L980 311.1L981 311.1L981 312.3L982 312.3L982 309.1L983 309.1L983 312.6L984 312.6L984 311.0L985 311.0L985 311.6L986 311.6L986 307.8L987 307.8L987 302.5L988 302.5L988 311.0L989 311.0L989 306.1L990 306.1L990 304.7L991 304.7L991 305.4L992 305.4L992 311.0L993 311.0L993 311.2L994 311.2L994 310.2L995 310.2L995 311.8L996 311.8L996 310.5L997 310.5L997 310.7L998 310.7L998 302.5L999 302.5L999 303.5L1000 303.5L1000 307.3L1001 307.3L1001 304.6L1002 304.6L1002 303.4L1003 303.4L1003 307.5L1004 307.5L1004 306.3L1005 306.3L1005 306.4L1006 306.4L1006 311.6L1007 311.6L1007 312.4L1008 312.4L1008 309.8L1009 309.8L1009 311.5L1010 311.5L1010 308.5L1011 308.5L1011 308.1L1012 308.1L1012 306.7L1013 306.7L1013 308.4L1014 308.4L1014 312.9L1015 312.9L1015 311.0L1016 311.0L1016 310.8L1017 310.8L1017 314.0L1018 314.0L1018 312.6L1019 312.6L1019 311.9L1020 311.9L1020 310.7L1021 310.7L1021 310.7L1022 310.7L1022 311.7L1023 311.7L1023 304.3L1024 304.3L1024 300.5L1025 300.5L1025 299.8L1026 299.8L1026 308.2L1027 308.2L1027 310.9L1028 310.9L1028 307.2L1029 307.2L1029 298.8L1030 298.8L1030 305.8L1031 305.8L1031 303.2L1032 303.2L1032 306.0L1033 306.0L1033 307.3L1034 307.3L1034 311.3L1035 311.3L1035 310.6L1036 310.6L1036 303.4L1037 303.4L1037 298.9L1038 298.9L1038 304.9L1039 304.9L1039 307.9L1040 307.9L1040 305.0L1041 305.0L1041 300.6L1042 300.6L1042 308.3L1043 308.3L1043 305.9L1044 305.9L1044 311.3L1045 311.3L1045 306.5L1046 306.5L1046 302.9L1047 302.9L1047 300.0L1048 300.0L1048 311.7L1049 311.7L1049 310.7L1050 310.7L1050 311.8L1051 311.8L1051 305.0L1052 305.0L1052 311.1L1053 311.1L1053 310.0L1054 310.0L1054 312.0L1055 312.0L1055 309.2L1056 309.2L1056 307.2L1057 307.2L1057 302.7L1058 302.7L1058 311.1L1059 311.1L1059 307.1L1060 307.1L1060 311.2L1061 311.2L1061 310.9L1062 310.9L1062 300.7L1063 300.7L1063 302.5L1064 302.5L1064 310.7L1065 310.7L1065 310.6L1066 310.6L1066 310.9L1067 310.9L1067 312.6L1068 312.6L1068 313.7L1069 313.7L1069 314.3L1070 314.3L1070 311.6L1071 311.6L1071 312.8L1072 312.8L1072 312.9L1073 312.9L1073 311.6L1074 311.6L1074 306.3L1075 306.3L1075 304.4L1076 304.4L1076 302.4L1077 302.4L1077 305.5L1078 305.5L1078 304.6L1079 304.6L1079 310.6L1080 310.6L1080 306.7L1081 306.7L1081 311.6L1082 311.6L1082 296.4L1083 296.4L1083 300.6L1084 300.6L1084 307.0L1085 307.0L1085 299.4L1086 299.4L1086 308.8L1087 308.8L1087 306.4L1088 306.4L1088 305.1L1089 305.1L1089 306.4L1090 306.4L1090 305.6L1091 305.6L1091 306.1L1092 306.1L1092 304.5L1093 304.5L1093 309.9L1094 309.9L1094 311.1L1095 311.1L1095 307.4L1096 307.4L1096 302.4L1097 302.4L1097 305.0L1098 305.0L1098 310.1L1099 310.1L1099 309.8L1100 309.8L1100 304.3L1101 304.3L1101 311.1L1102 311.1L1102 299.4L1103 299.4L1103 308.5L1104 308.5L1104 305.7L1105 305.7L1105 305.9L1106 305.9L1106 310.9L1107 310.9L1107 308.4L1108 308.4L1108 311.2L1109 311.2L1109 302.7L1110 302.7L1110 305.6L1111 305.6L1111 307.8L1112 307.8L1112 293.1L1113 293.1L1113 304.0L1114 304.0L1114 311.9L1115 311.9L1115 304.8L1116 304.8L1116 311.5L1117 311.5L1117 307.8L1118 307.8L1118 307.5L1119 307.5L1119 305.0L1120 305.0L1120 303.1L1121 303.1L1121 306.1L1122 306.1L1122 310.5L1123 310.5L1123 310.7L1124 310.7L1124 299.4L1125 299.4L1125 308.6L1126 308.6L1126 306.5L1127 306.5L1127 307.9L1128 307.9L1128 304.4L1129 304.4L1129 304.9L1130 304.9L1130 301.1L1131 301.1L1131 308.1L1132 308.1L1132 306.4L1133 306.4L1133 298.0L1134 298.0L1134 311.6L1135 311.6L1135 303.1L1136 303.1L1136 307.7L1137 307.7L1137 303.2L1138 303.2L1138 301.2L1139 301.2L1139 303.9L1140 303.9L1140 307.3L1141 307.3L1141 310.9L1142 310.9L1142 308.3L1143 308.3L1143 306.1L1144 306.1L1144 309.1L1145 309.1L1145 307.8L1146 307.8L1146 311.7L1147 311.7L1147 310.3L1148 310.3L1148 309.3L1149 309.3L1149 307.4L1150 307.4L1150 298.5L1151 298.5L1151 309.8L1152 309.8L1152 304.4L1153 304.4L1153 308.0L1154 308.0L1154 303.7L1155 303.7L1155 311.3L1156 311.3L1156 311.7L1157 311.7L1157 310.4L1158 310.4L1158 305.4L1159 305.4L1159 311.1L1160 311.1L1160 300.0L1161 300.0L1161 309.2L1162 309.2L1162 309.1L1163 309.1L1163 311.5L1164 311.5L1164 297.6L1165 297.6L1165 302.8L1166 302.8L1166 308.7L1167 308.7L1167 307.7L1168 307.7L1168 307.7L1169 307.7L1169 307.4L1170 307.4L1170 295.2L1171 295.2L1171 311.4L1172 311.4L1172 305.2L1173 305.2L1173 308.1L1174 308.1L1174 312.0L1175 312.0L1175 307.9L1176 307.9L1176 306.4L1177 306.4L1177 302.7L1178 302.7L1178 307.6L1179 307.6L1179 303.2L1180 303.2L1180 303.9L1181 303.9L1181 311.4L1182 311.4L1182 301.6L1183 301.6L1183 307.1L1184 307.1L1184 311.3L1185 311.3L1185 310.5L1186 310.5L1186 306.4L1187 306.4L1187 311.1L1188 311.1L1188 311.8L1189 311.8L1189 306.0L1190 306.0L1190 310.4L1191 310.4L1191 312.0L1192 312.0L1192 305.0L1193 305.0L1193 309.4L1194 309.4L1194 305.1L1195 305.1L1195 303.0L1196 303.0L1196 308.7L1197 308.7L1197 306.8L1198 306.8L1198 312.5L1199 312.5L1199 310.1L1200 310.1L1200 311.7L1201 311.7L1201 311.2L1202 311.2L1202 305.2L1203 305.2L1203 308.2L1204 308.2L1204 306.8L1205 306.8L1205 308.5L1206 308.5L1206 309.4L1207 309.4L1207 311.0L1208 311.0L1208 312.0L1209 312.0L1209 310.4L1210 310.4L1210 311.7L1211 311.7L1211 312.5L1212 312.5L1212 308.0L1213 308.0L1213 311.6L1214 311.6L1214 308.1L1215 308.1L1215 305.8L1216 305.8L1216 312.6L1217 312.6L1217 303.7L1218 303.7L1218 305.7L1219 305.7L1219 309.3L1220 309.3L1220 306.4L1221 306.4L1221 311.1L1222 311.1L1222 303.8L1223 303.8L1223 305.1L1224 305.1L1224 307.1L1225 307.1L1225 311.5L1226 311.5L1226 308.0L1227 308.0L1227 309.0L1228 309.0L1228 311.6L1229 311.6L1229 310.2L1230 310.2L1230 305.4L1231 305.4L1231 309.2L1232 309.2L1232 309.4L1233 309.4L1233 305.0L1234 305.0L1234 311.6L1235 311.6L1235 312.6L1236 312.6L1236 309.0L1237 309.0L1237 309.1L1238 309.1L1238 307.3L1239 307.3L1239 311.6L1240 311.6L1240 305.2L1241 305.2L1241 297.7L1242 297.7L1242 306.9L1243 306.9L1243 310.4L1244 310.4L1244 310.7L1245 310.7L1245 304.8L1246 304.8L1246 303.5L1247 303.5L1247 310.5L1248 310.5L1248 309.0L1249 309.0L1249 312.3L1250 312.3L1250 305.4L1251 305.4L1251 311.2L1252 311.2L1252 307.3L1253 307.3L1253 307.7L1254 307.7L1254 306.9L1255 306.9L1255 309.4L1256 309.4L1256 311.7L1257 311.7L1257 310.1L1258 310.1L1258 312.7L1259 312.7L1259 310.9L1260 310.9L1260 309.7L1261 309.7L1261 309.1L1262 309.1L1262 308.0L1263 308.0L1263 307.0L1264 307.0L1264 312.5L1265 312.5L1265 312.7L1266 312.7L1266 311.0L1267 311.0L1267 309.7L1268 309.7L1268 305.0L1269 305.0L1269 298.4L1270 298.4L1270 306.6L1271 306.6L1271 305.5L1272 305.5L1272 305.3L1273 305.3L1273 311.4L1274 311.4L1274 311.5L1275 311.5L1275 312.3L1276 312.3L1276 296.9L1277 296.9L1277 311.1L1278 311.1L1278 306.0L1279 306.0L1279 310.5L1280 310.5L1280 310.6L1281 310.6L1281 305.1L1282 305.1L1282 309.8L1283 309.8L1283 309.6L1284 309.6L1284 312.5L1285 312.5L1285 305.9L1286 305.9L1286 303.3L1287 303.3L1287 305.0L1288 305.0L1288 309.2L1289 309.2L1289 310.7L1290 310.7L1290 309.0L1291 309.0L1291 305.9L1292 305.9L1292 306.5L1293 306.5L1293 303.7L1294 303.7L1294 302.7L1295 302.7L1295 306.9L1296 306.9L1296 311.1L1297 311.1L1297 306.5L1298 306.5L1298 307.8L1299 307.8L1299 305.6L1300 305.6L1300 311.7L1301 311.7L1301 309.1L1302 309.1L1302 306.5L1303 306.5L1303 311.2L1304 311.2L1304 306.9L1305 306.9L1305 312.6L1306 312.6L1306 298.1L1307 298.1L1307 312.4L1308 312.4L1308 310.4L1309 310.4L1309 308.6L1310 308.6L1310 312.3L1311 312.3L1311 307.7L1312 307.7L1312 307.8L1313 307.8L1313 308.6L1314 308.6L1314 310.2L1315 310.2L1315 306.8L1316 306.8L1316 311.5L1317 311.5L1317 312.4L1318 312.4L1318 302.5L1319 302.5L1319 309.7L1320 309.7L1320 309.9L1321 309.9L1321 308.8L1322 308.8L1322 306.3L1323 306.3L1323 307.9L1324 307.9L1324 311.2L1325 311.2L1325 301.8L1326 301.8L1326 306.3L1327 306.3L1327 306.6L1328 306.6L1328 311.4L1329 311.4L1329 308.7L1330 308.7L1330 300.7L1331 300.7L1331 309.7L1332 309.7L1332 312.2L1333 312.2L1333 307.6L1334 307.6L1334 308.4L1335 308.4L1335 311.9L1336 311.9L1336 305.9L1337 305.9L1337 302.2L1338 302.2L1338 310.1L1339 310.1L1339 306.6L1340 306.6L1340 310.4L1341 310.4L1341 311.8L1342 311.8L1342 311.7L1343 311.7L1343 312.0L1344 312.0L1344 310.5L1345 310.5L1345 303.0L1346 303.0L1346 310.7L1347 310.7L1347 309.2L1348 309.2L1348 305.0L1349 305.0L1349 311.5L1350 311.5L1350 297.6L1351 297.6L1351 308.1L1352 308.1L1352 311.2L1353 311.2L1353 309.5L1354 309.5L1354 305.8L1355 305.8L1355 306.1L1356 306.1L1356 310.6L1357 310.6L1357 312.2L1358 312.2L1358 304.3L1359 304.3L1359 308.6L1360 308.6L1360 311.6L1361 311.6L1361 311.4L1362 311.4L1362 310.6L1363 310.6L1363 309.8L1364 309.8L1364 302.7L1365 302.7L1365 308.8L1366 308.8L1366 306.0L1367 306.0L1367 310.5L1368 310.5L1368 312.2L1369 312.2L1369 297.9L1370 297.9L1370 311.9L1371 311.9L1371 308.1L1372 308.1L1372 306.7L1373 306.7L1373 306.2L1374 306.2L1374 312.2L1375 312.2L1375 312.0L1376 312.0L1376 300.7L1377 300.7L1377 308.9L1378 308.9L1378 311.5L1379 311.5L1379 305.9L1380 305.9L1380 306.3L1381 306.3L1381 303.0L1382 303.0L1382 307.2L1383 307.2L1383 307.1L1384 307.1L1384 308.6L1385 308.6L1385 302.9L1386 302.9L1386 305.3L1387 305.3L1387 311.3L1388 311.3L1388 309.8L1389 309.8L1389 310.6L1390 310.6L1390 309.4L1391 309.4L1391 308.2L1392 308.2L1392 306.7L1393 306.7L1393 310.7L1394 310.7L1394 311.9L1395 311.9L1395 311.8L1396 311.8L1396 311.6L1397 311.6L1397 307.1L1398 307.1L1398 304.3L1399 304.3L1399 310.9L1400 310.9L1400 307.3L1401 307.3L1401 308.0L1402 308.0L1402 311.1L1403 311.1L1403 310.4L1404 310.4L1404 304.2L1405 304.2L1405 304.1L1406 304.1L1406 299.6L1407 299.6L1407 311.5L1408 311.5L1408 301.7L1409 301.7L1409 301.4L1410 301.4L1410 309.3L1411 309.3L1411 302.2L1412 302.2L1412 312.1L1413 312.1L1413 308.9L1414 308.9L1414 301.2L1415 301.2L1415 305.4L1416 305.4L1416 309.4L1417 309.4L1417 309.5L1418 309.5L1418 310.1L1419 310.1L1419 308.1L1420 308.1L1420 311.9L1421 311.9L1421 308.5L1422 308.5L1422 302.8L1423 302.8L1423 298.1L1424 298.1L1424 312.0L1425 312.0L1425 301.8L1426 301.8L1426 311.8L1427 311.8L1427 304.0L1428 304.0L1428 311.3L1429 311.3L1429 308.3L1430 308.3L1430 310.1L1431 310.1L1431 311.9L1432 311.9L1432 301.4L1433 301.4L1433 308.9L1434 308.9L1434 311.5L1435 311.5L1435 307.1L1436 307.1L1436 311.1L1437 311.1L1437 305.4L1438 305.4L1438 306.8L1439 306.8L1439 306.8L1440 306.8L1440 311.0L1441 311.0L1441 302.7L1442 302.7L1442 302.7L1443 302.7L1443 300.6L1444 300.6L1444 311.7L1445 311.7L1445 307.6L1446 307.6L1446 307.4L1447 307.4L1447 306.9L1448 306.9L1448 307.2L1449 307.2L1449 306.1L1450 306.1L1450 310.2L1451 310.2L1451 308.3L1452 308.3L1452 311.7L1453 311.7L1453 311.7L1454 311.7L1454 312.2L1455 312.2L1455 307.6L1456 307.6L1456 306.9L1457 306.9L1457 306.6L1458 306.6L1458 307.8L1459 307.8L1459 311.1L1460 311.1L1460 307.2L1461 307.2L1461 303.7L1462 303.7L1462 305.7L1463 305.7L1463 307.9L1464 307.9L1464 305.1L1465 305.1L1465 306.1L1466 306.1L1466 322.6L1465 322.6L1465 323.1L1464 323.1L1464 337.2L1463 337.2L1463 322.9L1462 322.9L1462 324.0L1461 324.0L1461 321.8L1460 321.8L1460 324.1L1459 324.1L1459 321.1L1458 321.1L1458 324.5L1457 324.5L1457 330.3L1456 330.3L1456 329.1L1455 329.1L1455 332.6L1454 332.6L1454 321.0L1453 321.0L1453 323.7L1452 323.7L1452 322.8L1451 322.8L1451 321.6L1450 321.6L1450 322.1L1449 322.1L1449 323.3L1448 323.3L1448 328.2L1447 328.2L1447 327.2L1446 327.2L1446 323.8L1445 323.8L1445 326.7L1444 326.7L1444 330.7L1443 330.7L1443 322.1L1442 322.1L1442 321.1L1441 321.1L1441 328.0L1440 328.0L1440 326.3L1439 326.3L1439 325.3L1438 325.3L1438 321.1L1437 321.1L1437 326.4L1436 326.4L1436 328.9L1435 328.9L1435 325.0L1434 325.0L1434 321.0L1433 321.0L1433 329.5L1432 329.5L1432 325.1L1431 325.1L1431 322.7L1430 322.7L1430 320.8L1429 320.8L1429 322.4L1428 322.4L1428 321.2L1427 321.2L1427 325.4L1426 325.4L1426 332.6L1425 332.6L1425 322.3L1424 322.3L1424 321.6L1423 321.6L1423 332.1L1422 332.1L1422 338.9L1421 338.9L1421 331.5L1420 331.5L1420 330.4L1419 330.4L1419 336.9L1418 336.9L1418 321.0L1417 321.0L1417 321.8L1416 321.8L1416 323.6L1415 323.6L1415 326.1L1414 326.1L1414 322.0L1413 322.0L1413 330.6L1412 330.6L1412 325.2L1411 325.2L1411 322.0L1410 322.0L1410 323.5L1409 323.5L1409 331.5L1408 331.5L1408 330.5L1407 330.5L1407 322.2L1406 322.2L1406 325.2L1405 325.2L1405 323.1L1404 323.1L1404 330.3L1403 330.3L1403 328.9L1402 328.9L1402 324.3L1401 324.3L1401 321.5L1400 321.5L1400 325.8L1399 325.8L1399 322.2L1398 322.2L1398 322.4L1397 322.4L1397 323.8L1396 323.8L1396 325.5L1395 325.5L1395 333.5L1394 333.5L1394 329.4L1393 329.4L1393 324.7L1392 324.7L1392 329.9L1391 329.9L1391 331.9L1390 331.9L1390 320.9L1389 320.9L1389 326.9L1388 326.9L1388 323.8L1387 323.8L1387 326.9L1386 326.9L1386 329.4L1385 329.4L1385 321.5L1384 321.5L1384 329.0L1383 329.0L1383 326.7L1382 326.7L1382 322.2L1381 322.2L1381 323.1L1380 323.1L1380 331.2L1379 331.2L1379 323.4L1378 323.4L1378 324.7L1377 324.7L1377 322.7L1376 322.7L1376 329.6L1375 329.6L1375 321.4L1374 321.4L1374 325.4L1373 325.4L1373 329.0L1372 329.0L1372 323.1L1371 323.1L1371 329.9L1370 329.9L1370 328.4L1369 328.4L1369 324.5L1368 324.5L1368 326.3L1367 326.3L1367 321.3L1366 321.3L1366 321.9L1365 321.9L1365 323.2L1364 323.2L1364 323.3L1363 323.3L1363 324.9L1362 324.9L1362 321.6L1361 321.6L1361 322.6L1360 322.6L1360 328.1L1359 328.1L1359 329.0L1358 329.0L1358 327.9L1357 327.9L1357 324.0L1356 324.0L1356 323.0L1355 323.0L1355 326.6L1354 326.6L1354 325.0L1353 325.0L1353 332.2L1352 332.2L1352 323.4L1351 323.4L1351 331.5L1350 331.5L1350 331.2L1349 331.2L1349 326.7L1348 326.7L1348 328.6L1347 328.6L1347 321.6L1346 321.6L1346 320.9L1345 320.9L1345 324.4L1344 324.4L1344 323.3L1343 323.3L1343 332.0L1342 332.0L1342 320.8L1341 320.8L1341 327.4L1340 327.4L1340 323.7L1339 323.7L1339 323.6L1338 323.6L1338 332.0L1337 332.0L1337 322.1L1336 322.1L1336 321.7L1335 321.7L1335 324.3L1334 324.3L1334 322.5L1333 322.5L1333 322.9L1332 322.9L1332 325.1L1331 325.1L1331 329.8L1330 329.8L1330 326.2L1329 326.2L1329 331.9L1328 331.9L1328 327.9L1327 327.9L1327 327.2L1326 327.2L1326 324.1L1325 324.1L1325 329.5L1324 329.5L1324 323.9L1323 323.9L1323 322.4L1322 322.4L1322 327.4L1321 327.4L1321 325.5L1320 325.5L1320 328.2L1319 328.2L1319 326.2L1318 326.2L1318 333.9L1317 333.9L1317 321.8L1316 321.8L1316 327.6L1315 327.6L1315 321.9L1314 321.9L1314 324.5L1313 324.5L1313 323.1L1312 323.1L1312 325.9L1311 325.9L1311 325.1L1310 325.1L1310 333.3L1309 333.3L1309 323.0L1308 323.0L1308 325.7L1307 325.7L1307 328.3L1306 328.3L1306 324.5L1305 324.5L1305 326.7L1304 326.7L1304 321.6L1303 321.6L1303 329.3L1302 329.3L1302 325.2L1301 325.2L1301 327.9L1300 327.9L1300 326.9L1299 326.9L1299 321.6L1298 321.6L1298 322.8L1297 322.8L1297 328.3L1296 328.3L1296 322.1L1295 322.1L1295 323.3L1294 323.3L1294 324.9L1293 324.9L1293 323.3L1292 323.3L1292 334.5L1291 334.5L1291 323.0L1290 323.0L1290 335.1L1289 335.1L1289 320.4L1288 320.4L1288 323.7L1287 323.7L1287 332.9L1286 332.9L1286 320.7L1285 320.7L1285 325.0L1284 325.0L1284 324.5L1283 324.5L1283 324.6L1282 324.6L1282 326.5L1281 326.5L1281 322.4L1280 322.4L1280 327.6L1279 327.6L1279 320.4L1278 320.4L1278 320.7L1277 320.7L1277 330.1L1276 330.1L1276 322.4L1275 322.4L1275 321.2L1274 321.2L1274 325.4L1273 325.4L1273 330.8L1272 330.8L1272 330.5L1271 330.5L1271 322.7L1270 322.7L1270 324.3L1269 324.3L1269 321.2L1268 321.2L1268 321.6L1267 321.6L1267 322.4L1266 322.4L1266 322.5L1265 322.5L1265 320.5L1264 320.5L1264 326.3L1263 326.3L1263 324.6L1262 324.6L1262 320.5L1261 320.5L1261 320.2L1260 320.2L1260 336.1L1259 336.1L1259 320.9L1258 320.9L1258 326.6L1257 326.6L1257 331.3L1256 331.3L1256 325.9L1255 325.9L1255 327.3L1254 327.3L1254 321.5L1253 321.5L1253 327.6L1252 327.6L1252 324.5L1251 324.5L1251 335.7L1250 335.7L1250 326.2L1249 326.2L1249 321.2L1248 321.2L1248 326.7L1247 326.7L1247 330.0L1246 330.0L1246 321.3L1245 321.3L1245 329.1L1244 329.1L1244 326.0L1243 326.0L1243 320.4L1242 320.4L1242 325.7L1241 325.7L1241 321.1L1240 321.1L1240 326.6L1239 326.6L1239 320.7L1238 320.7L1238 320.6L1237 320.6L1237 321.7L1236 321.7L1236 327.2L1235 327.2L1235 322.1L1234 322.1L1234 322.4L1233 322.4L1233 323.5L1232 323.5L1232 330.9L1231 330.9L1231 326.9L1230 326.9L1230 321.2L1229 321.2L1229 324.4L1228 324.4L1228 321.6L1227 321.6L1227 324.9L1226 324.9L1226 323.4L1225 323.4L1225 321.9L1224 321.9L1224 322.4L1223 322.4L1223 323.3L1222 323.3L1222 321.1L1221 321.1L1221 328.1L1220 328.1L1220 325.7L1219 325.7L1219 320.9L1218 320.9L1218 324.7L1217 324.7L1217 326.5L1216 326.5L1216 320.5L1215 320.5L1215 325.0L1214 325.0L1214 321.5L1213 321.5L1213 336.8L1212 336.8L1212 329.5L1211 329.5L1211 320.6L1210 320.6L1210 320.6L1209 320.6L1209 321.1L1208 321.1L1208 326.0L1207 326.0L1207 322.6L1206 322.6L1206 324.3L1205 324.3L1205 321.4L1204 321.4L1204 323.3L1203 323.3L1203 322.1L1202 322.1L1202 328.1L1201 328.1L1201 321.0L1200 321.0L1200 332.6L1199 332.6L1199 331.1L1198 331.1L1198 320.7L1197 320.7L1197 329.1L1196 329.1L1196 320.8L1195 320.8L1195 324.1L1194 324.1L1194 324.9L1193 324.9L1193 322.8L1192 322.8L1192 323.7L1191 323.7L1191 322.6L1190 322.6L1190 324.6L1189 324.6L1189 325.0L1188 325.0L1188 321.9L1187 321.9L1187 326.1L1186 326.1L1186 329.0L1185 329.0L1185 326.3L1184 326.3L1184 331.7L1183 331.7L1183 327.1L1182 327.1L1182 325.4L1181 325.4L1181 323.6L1180 323.6L1180 321.9L1179 321.9L1179 321.8L1178 321.8L1178 324.7L1177 324.7L1177 323.0L1176 323.0L1176 330.3L1175 330.3L1175 321.8L1174 321.8L1174 329.3L1173 329.3L1173 322.7L1172 322.7L1172 330.3L1171 330.3L1171 323.1L1170 323.1L1170 323.5L1169 323.5L1169 323.8L1168 323.8L1168 326.2L1167 326.2L1167 321.0L1166 321.0L1166 326.3L1165 326.3L1165 323.2L1164 323.2L1164 323.6L1163 323.6L1163 323.9L1162 323.9L1162 321.7L1161 321.7L1161 324.6L1160 324.6L1160 324.4L1159 324.4L1159 339.8L1158 339.8L1158 323.3L1157 323.3L1157 326.6L1156 326.6L1156 331.0L1155 331.0L1155 324.2L1154 324.2L1154 324.4L1153 324.4L1153 332.8L1152 332.8L1152 323.5L1151 323.5L1151 334.4L1150 334.4L1150 334.0L1149 334.0L1149 322.1L1148 322.1L1148 322.8L1147 322.8L1147 329.3L1146 329.3L1146 328.9L1145 328.9L1145 322.4L1144 322.4L1144 322.3L1143 322.3L1143 327.0L1142 327.0L1142 323.6L1141 323.6L1141 322.8L1140 322.8L1140 330.7L1139 330.7L1139 331.8L1138 331.8L1138 329.5L1137 329.5L1137 323.3L1136 323.3L1136 326.2L1135 326.2L1135 321.3L1134 321.3L1134 325.2L1133 325.2L1133 330.8L1132 330.8L1132 324.9L1131 324.9L1131 323.2L1130 323.2L1130 324.6L1129 324.6L1129 326.3L1128 326.3L1128 321.6L1127 321.6L1127 326.3L1126 326.3L1126 321.2L1125 321.2L1125 328.7L1124 328.7L1124 327.9L1123 327.9L1123 326.7L1122 326.7L1122 324.0L1121 324.0L1121 322.7L1120 322.7L1120 323.0L1119 323.0L1119 328.1L1118 328.1L1118 327.1L1117 327.1L1117 324.5L1116 324.5L1116 321.3L1115 321.3L1115 325.6L1114 325.6L1114 326.8L1113 326.8L1113 330.2L1112 330.2L1112 333.4L1111 333.4L1111 322.5L1110 322.5L1110 323.0L1109 323.0L1109 326.0L1108 326.0L1108 324.7L1107 324.7L1107 328.2L1106 328.2L1106 336.0L1105 336.0L1105 325.6L1104 325.6L1104 326.2L1103 326.2L1103 322.8L1102 322.8L1102 332.3L1101 332.3L1101 321.5L1100 321.5L1100 324.1L1099 324.1L1099 326.5L1098 326.5L1098 322.0L1097 322.0L1097 322.5L1096 322.5L1096 324.6L1095 324.6L1095 326.5L1094 326.5L1094 324.1L1093 324.1L1093 322.8L1092 322.8L1092 323.0L1091 323.0L1091 327.1L1090 327.1L1090 329.5L1089 329.5L1089 329.3L1088 329.3L1088 321.5L1087 321.5L1087 327.1L1086 327.1L1086 326.2L1085 326.2L1085 322.5L1084 322.5L1084 323.5L1083 323.5L1083 326.4L1082 326.4L1082 327.5L1081 327.5L1081 326.6L1080 326.6L1080 327.6L1079 327.6L1079 321.3L1078 321.3L1078 330.9L1077 330.9L1077 331.5L1076 331.5L1076 324.4L1075 324.4L1075 323.9L1074 323.9L1074 321.5L1073 321.5L1073 326.9L1072 326.9L1072 320.0L1071 320.0L1071 321.0L1070 321.0L1070 319.7L1069 319.7L1069 321.9L1068 321.9L1068 320.7L1067 320.7L1067 321.5L1066 321.5L1066 321.3L1065 321.3L1065 336.4L1064 336.4L1064 322.4L1063 322.4L1063 321.5L1062 321.5L1062 324.1L1061 324.1L1061 333.0L1060 333.0L1060 322.1L1059 322.1L1059 329.7L1058 329.7L1058 333.3L1057 333.3L1057 323.7L1056 323.7L1056 324.0L1055 324.0L1055 326.1L1054 326.1L1054 321.9L1053 321.9L1053 323.6L1052 323.6L1052 330.9L1051 330.9L1051 327.3L1050 327.3L1050 323.6L1049 323.6L1049 322.5L1048 322.5L1048 324.1L1047 324.1L1047 322.3L1046 322.3L1046 329.0L1045 329.0L1045 327.0L1044 327.0L1044 330.8L1043 330.8L1043 321.6L1042 321.6L1042 337.2L1041 337.2L1041 322.1L1040 322.1L1040 323.7L1039 323.7L1039 324.2L1038 324.2L1038 328.8L1037 328.8L1037 326.0L1036 326.0L1036 321.2L1035 321.2L1035 325.4L1034 325.4L1034 330.9L1033 330.9L1033 335.9L1032 335.9L1032 322.2L1031 322.2L1031 332.9L1030 332.9L1030 323.7L1029 323.7L1029 339.2L1028 339.2L1028 328.6L1027 328.6L1027 322.6L1026 322.6L1026 325.1L1025 325.1L1025 330.9L1024 330.9L1024 324.3L1023 324.3L1023 326.8L1022 326.8L1022 319.6L1021 319.6L1021 320.6L1020 320.6L1020 319.1L1019 319.1L1019 318.8L1018 318.8L1018 318.0L1017 318.0L1017 322.2L1016 322.2L1016 319.2L1015 319.2L1015 320.0L1014 320.0L1014 327.0L1013 327.0L1013 319.9L1012 319.9L1012 320.8L1011 320.8L1011 335.7L1010 335.7L1010 326.0L1009 326.0L1009 321.5L1008 321.5L1008 321.3L1007 321.3L1007 327.4L1006 327.4L1006 339.1L1005 339.1L1005 323.9L1004 323.9L1004 324.7L1003 324.7L1003 338.7L1002 338.7L1002 327.4L1001 327.4L1001 325.8L1000 325.8L1000 323.3L999 323.3L999 325.1L998 325.1L998 327.6L997 327.6L997 320.6L996 320.6L996 327.2L995 327.2L995 321.3L994 321.3L994 327.2L993 327.2L993 324.7L992 324.7L992 325.0L991 325.0L991 320.9L990 320.9L990 326.6L989 326.6L989 321.2L988 321.2L988 321.5L987 321.5L987 321.8L986 321.8L986 323.5L985 323.5L985 320.8L984 320.8L984 320.6L983 320.6L983 321.6L982 321.6L982 322.7L981 322.7L981 323.5L980 323.5L980 326.5L979 326.5L979 324.4L978 324.4L978 322.3L977 322.3L977 320.4L976 320.4L976 324.0L975 324.0L975 321.9L974 321.9L974 321.1L973 321.1L973 321.5L972 321.5L972 323.6L971 323.6L971 324.2L970 324.2L970 323.7L969 323.7L969 324.6L968 324.6L968 322.9L967 322.9L967 325.0L966 325.0L966 326.0L965 326.0L965 327.7L964 327.7L964 327.3L963 327.3L963 326.9L962 326.9L962 320.6L961 320.6L961 329.7L960 329.7L960 322.1L959 322.1L959 323.1L958 323.1L958 321.9L957 321.9L957 325.9L956 325.9L956 323.9L955 323.9L955 325.8L954 325.8L954 323.8L953 323.8L953 320.9L952 320.9L952 320.9L951 320.9L951 320.2L950 320.2L950 330.1L949 330.1L949 327.6L948 327.6L948 321.7L947 321.7L947 323.8L946 323.8L946 321.0L945 321.0L945 323.8L944 323.8L944 329.5L943 329.5L943 323.6L942 323.6L942 327.0L941 327.0L941 329.7L940 329.7L940 322.4L939 322.4L939 326.4L938 326.4L938 326.2L937 326.2L937 323.6L936 323.6L936 321.2L935 321.2L935 322.9L934 322.9L934 320.1L933 320.1L933 330.9L932 330.9L932 326.2L931 326.2L931 321.7L930 321.7L930 323.8L929 323.8L929 326.7L928 326.7L928 325.0L927 325.0L927 320.6L926 320.6L926 330.9L925 330.9L925 321.8L924 321.8L924 320.4L923 320.4L923 325.5L922 325.5L922 331.0L921 331.0L921 329.4L920 329.4L920 322.1L919 322.1L919 327.0L918 327.0L918 323.7L917 323.7L917 320.2L916 320.2L916 322.9L915 322.9L915 320.4L914 320.4L914 326.3L913 326.3L913 320.9L912 320.9L912 320.0L911 320.0L911 329.0L910 329.0L910 320.0L909 320.0L909 320.8L908 320.8L908 320.3L907 320.3L907 327.5L906 327.5L906 321.3L905 321.3L905 321.5L904 321.5L904 322.4L903 322.4L903 320.1L902 320.1L902 325.0L901 325.0L901 321.3L900 321.3L900 322.1L899 322.1L899 323.7L898 323.7L898 321.4L897 321.4L897 322.6L896 322.6L896 323.6L895 323.6L895 321.4L894 321.4L894 320.6L893 320.6L893 319.8L892 319.8L892 319.8L891 319.8L891 318.5L890 318.5L890 317.7L889 317.7L889 319.6L888 319.6L888 320.9L887 320.9L887 323.0L886 323.0L886 322.7L885 322.7L885 326.9L884 326.9L884 329.8L883 329.8L883 320.9L882 320.9L882 327.1L881 327.1L881 328.7L880 328.7L880 325.9L879 325.9L879 325.2L878 325.2L878 327.5L877 327.5L877 325.5L876 325.5L876 327.7L875 327.7L875 323.1L874 323.1L874 323.3L873 323.3L873 325.6L872 325.6L872 325.1L871 325.1L871 321.2L870 321.2L870 327.8L869 327.8L869 326.5L868 326.5L868 324.3L867 324.3L867 322.6L866 322.6L866 321.6L865 321.6L865 334.2L864 334.2L864 323.5L863 323.5L863 323.6L862 323.6L862 322.1L861 322.1L861 328.2L860 328.2L860 321.5L859 321.5L859 322.1L858 322.1L858 330.6L857 330.6L857 320.7L856 320.7L856 327.9L855 327.9L855 326.2L854 326.2L854 324.7L853 324.7L853 325.4L852 325.4L852 320.9L851 320.9L851 321.7L850 321.7L850 324.4L849 324.4L849 325.3L848 325.3L848 328.9L847 328.9L847 324.1L846 324.1L846 334.3L845 334.3L845 325.4L844 325.4L844 323.4L843 323.4L843 323.3L842 323.3L842 323.4L841 323.4L841 324.0L840 324.0L840 320.4L839 320.4L839 322.0L838 322.0L838 328.7L837 328.7L837 325.4L836 325.4L836 334.0L835 334.0L835 322.8L834 322.8L834 321.5L833 321.5L833 323.6L832 323.6L832 323.8L831 323.8L831 325.6L830 325.6L830 327.0L829 327.0L829 322.8L828 322.8L828 325.8L827 325.8L827 322.4L826 322.4L826 324.9L825 324.9L825 325.6L824 325.6L824 324.4L823 324.4L823 320.5L822 320.5L822 326.2L821 326.2L821 324.8L820 324.8L820 324.6L819 324.6L819 328.6L818 328.6L818 321.6L817 321.6L817 333.7L816 333.7L816 320.4L815 320.4L815 324.7L814 324.7L814 320.9L813 320.9L813 322.8L812 322.8L812 330.6L811 330.6L811 328.5L810 328.5L810 324.6L809 324.6L809 325.1L808 325.1L808 322.8L807 322.8L807 322.3L806 322.3L806 321.6L805 321.6L805 327.3L804 327.3L804 322.9L803 322.9L803 322.4L802 322.4L802 323.0L801 323.0L801 321.5L800 321.5L800 325.1L799 325.1L799 327.9L798 327.9L798 331.1L797 331.1L797 322.2L796 322.2L796 321.8L795 321.8L795 320.8L794 320.8L794 321.1L793 321.1L793 323.5L792 323.5L792 320.9L791 320.9L791 326.0L790 326.0L790 323.1L789 323.1L789 326.4L788 326.4L788 325.6L787 325.6L787 327.8L786 327.8L786 323.0L785 323.0L785 329.8L784 329.8L784 322.0L783 322.0L783 323.4L782 323.4L782 325.5L781 325.5L781 321.9L780 321.9L780 322.8L779 322.8L779 327.9L778 327.9L778 320.8L777 320.8L777 328.8L776 328.8L776 330.4L775 330.4L775 330.4L774 330.4L774 322.2L773 322.2L773 325.4L772 325.4L772 321.3L771 321.3L771 321.1L770 321.1L770 328.3L769 328.3L769 321.3L768 321.3L768 321.0L767 321.0L767 320.6L766 320.6L766 324.0L765 324.0L765 325.7L764 325.7L764 327.5L763 327.5L763 328.7L762 328.7L762 329.6L761 329.6L761 322.2L760 322.2L760 321.2L759 321.2L759 328.9L758 328.9L758 329.0L757 329.0L757 321.2L756 321.2L756 328.4L755 328.4L755 320.9L754 320.9L754 324.1L753 324.1L753 326.6L752 326.6L752 323.2L751 323.2L751 320.9L750 320.9L750 323.1L749 323.1L749 326.0L748 326.0L748 321.6L747 321.6L747 326.9L746 326.9L746 331.4L745 331.4L745 323.0L744 323.0L744 322.1L743 322.1L743 320.8L742 320.8L742 323.3L741 323.3L741 328.3L740 328.3L740 326.3L739 326.3L739 325.5L738 325.5L738 324.9L737 324.9L737 323.0L736 323.0L736 323.1L735 323.1L735 327.5L734 327.5L734 323.4L733 323.4L733 335.4L732 335.4L732 326.3L731 326.3L731 330.0L730 330.0L730 321.6L729 321.6L729 325.4L728 325.4L728 327.3L727 327.3L727 324.3L726 324.3L726 323.7L725 323.7L725 329.9L724 329.9L724 324.1L723 324.1L723 330.7L722 330.7L722 320.7L721 320.7L721 321.6L720 321.6L720 332.9L719 332.9L719 321.3L718 321.3L718 322.8L717 322.8L717 330.5L716 330.5L716 322.6L715 322.6L715 327.4L714 327.4L714 327.1L713 327.1L713 322.2L712 322.2L712 321.7L711 321.7L711 322.1L710 322.1L710 324.2L709 324.2L709 329.6L708 329.6L708 323.2L707 323.2L707 326.2L706 326.2L706 331.5L705 331.5L705 320.4L704 320.4L704 321.4L703 321.4L703 320.9L702 320.9L702 320.9L701 320.9L701 322.8L700 322.8L700 330.2L699 330.2L699 324.9L698 324.9L698 321.7L697 321.7L697 326.2L696 326.2L696 322.8L695 322.8L695 321.4L694 321.4L694 323.6L693 323.6L693 324.0L692 324.0L692 321.8L691 321.8L691 320.8L690 320.8L690 322.6L689 322.6L689 326.8L688 326.8L688 331.6L687 331.6L687 323.4L686 323.4L686 324.6L685 324.6L685 325.5L684 325.5L684 322.6L683 322.6L683 320.6L682 320.6L682 325.6L681 325.6L681 324.6L680 324.6L680 323.3L679 323.3L679 322.3L678 322.3L678 322.8L677 322.8L677 323.6L676 323.6L676 322.8L675 322.8L675 329.7L674 329.7L674 320.0L673 320.0L673 330.0L672 330.0L672 325.0L671 325.0L671 321.0L670 321.0L670 324.6L669 324.6L669 325.3L668 325.3L668 325.6L667 325.6L667 322.7L666 322.7L666 325.5L665 325.5L665 320.5L664 320.5L664 323.7L663 323.7L663 328.8L662 328.8L662 324.1L661 324.1L661 323.3L660 323.3L660 320.4L659 320.4L659 331.3L658 331.3L658 320.0L657 320.0L657 323.2L656 323.2L656 324.4L655 324.4L655 320.8L654 320.8L654 320.4L653 320.4L653 320.5L652 320.5L652 322.8L651 322.8L651 321.3L650 321.3L650 323.7L649 323.7L649 325.8L648 325.8L648 320.3L647 320.3L647 321.2L646 321.2L646 322.1L645 322.1L645 321.4L644 321.4L644 320.7L643 320.7L643 322.7L642 322.7L642 325.1L641 325.1L641 320.2L640 320.2L640 327.2L639 327.2L639 327.1L638 327.1L638 325.7L637 325.7L637 320.0L636 320.0L636 320.5L635 320.5L635 320.9L634 320.9L634 326.8L633 326.8L633 324.2L632 324.2L632 324.1L631 324.1L631 328.9L630 328.9L630 323.4L629 323.4L629 325.2L628 325.2L628 322.7L627 322.7L627 321.4L626 321.4L626 321.8L625 321.8L625 319.8L624 319.8L624 328.8L623 328.8L623 319.9L622 319.9L622 327.4L621 327.4L621 321.4L620 321.4L620 324.2L619 324.2L619 326.1L618 326.1L618 320.1L617 320.1L617 320.2L616 320.2L616 324.3L615 324.3L615 322.9L614 322.9L614 323.2L613 323.2L613 322.4L612 322.4L612 320.0L611 320.0L611 322.0L610 322.0L610 328.1L609 328.1L609 326.9L608 326.9L608 321.2L607 321.2L607 321.1L606 321.1L606 323.6L605 323.6L605 327.0L604 327.0L604 321.2L603 321.2L603 324.0L602 324.0L602 324.2L601 324.2L601 320.7L600 320.7L600 323.4L599 323.4L599 324.9L598 324.9L598 321.5L597 321.5L597 324.5L596 324.5L596 324.4L595 324.4L595 319.6L594 319.6L594 325.4L593 325.4L593 324.6L592 324.6L592 319.9L591 319.9L591 330.1L590 330.1L590 325.7L589 325.7L589 322.1L588 322.1L588 320.2L587 320.2L587 323.4L586 323.4L586 325.6L585 325.6L585 319.7L584 319.7L584 323.1L583 323.1L583 321.0L582 321.0L582 324.7L581 324.7L581 321.3L580 321.3L580 321.0L579 321.0L579 324.2L578 324.2L578 322.7L577 322.7L577 323.7L576 323.7L576 325.0L575 325.0L575 320.3L574 320.3L574 321.0L573 321.0L573 326.8L572 326.8L572 321.5L571 321.5L571 324.3L570 324.3L570 320.3L569 320.3L569 324.4L568 324.4L568 323.9L567 323.9L567 323.1L566 323.1L566 322.2L565 322.2L565 319.8L564 319.8L564 321.3L563 321.3L563 325.5L562 325.5L562 320.0L561 320.0L561 319.9L560 319.9L560 320.1L559 320.1L559 320.1L558 320.1L558 324.2L557 324.2L557 319.7L556 319.7L556 322.7L555 322.7L555 319.6L554 319.6L554 325.8L553 325.8L553 325.4L552 325.4L552 324.6L551 324.6L551 319.7L550 319.7L550 324.5L549 324.5L549 323.3L548 323.3L548 320.0L547 320.0L547 319.7L546 319.7L546 323.8L545 323.8L545 321.5L544 321.5L544 323.6L543 323.6L543 323.6L542 323.6L542 321.6L541 321.6L541 325.9L540 325.9L540 321.1L539 321.1L539 323.5L538 323.5L538 319.8L537 319.8L537 322.2L536 322.2L536 324.0L535 324.0L535 320.4L534 320.4L534 321.4L533 321.4L533 324.3L532 324.3L532 324.4L531 324.4L531 323.3L530 323.3L530 322.6L529 322.6L529 320.8L528 320.8L528 326.6L527 326.6L527 324.7L526 324.7L526 319.9L525 319.9L525 324.2L524 324.2L524 323.2L523 323.2L523 325.5L522 325.5L522 320.0L521 320.0L521 326.0L520 326.0L520 320.8L519 320.8L519 321.4L518 321.4L518 324.4L517 324.4L517 321.3L516 321.3L516 320.1L515 320.1L515 321.9L514 321.9L514 323.2L513 323.2L513 325.1L512 325.1L512 321.1L511 321.1L511 325.8L510 325.8L510 320.2L509 320.2L509 331.2L508 331.2L508 320.4L507 320.4L507 322.5L506 322.5L506 320.1L505 320.1L505 321.4L504 321.4L504 330.2L503 330.2L503 329.7L502 329.7L502 323.3L501 323.3L501 324.6L500 324.6L500 322.6L499 322.6L499 322.2L498 322.2L498 324.5L497 324.5L497 321.1L496 321.1L496 320.9L495 320.9L495 325.5L494 325.5L494 321.4L493 321.4L493 327.8L492 327.8L492 322.9L491 322.9L491 325.4L490 325.4L490 322.7L489 322.7L489 320.8L488 320.8L488 322.8L487 322.8L487 328.7L486 328.7L486 330.1L485 330.1L485 325.1L484 325.1L484 321.2L483 321.2L483 325.8L482 325.8L482 328.0L481 328.0L481 323.2L480 323.2L480 322.3L479 322.3L479 326.4L478 326.4L478 336.6L477 336.6L477 322.2L476 322.2L476 326.8L475 326.8L475 323.5L474 323.5L474 320.6L473 320.6L473 324.6L472 324.6L472 325.7L471 325.7L471 331.3L470 331.3L470 321.1L469 321.1L469 322.2L468 322.2L468 324.4L467 324.4L467 325.6L466 325.6L466 325.8L465 325.8L465 326.5L464 326.5L464 320.8L463 320.8L463 321.1L462 321.1L462 320.8L461 320.8L461 336.0L460 336.0L460 323.4L459 323.4L459 321.0L458 321.0L458 324.1L457 324.1L457 320.6L456 320.6L456 320.1L455 320.1L455 323.1L454 323.1L454 320.3L453 320.3L453 318.8L452 318.8L452 318.1L451 318.1L451 319.1L450 319.1L450 320.0L449 320.0L449 319.7L448 319.7L448 323.0L447 323.0L447 319.4L446 319.4L446 323.8L445 323.8L445 322.2L444 322.2L444 321.4L443 321.4L443 324.4L442 324.4L442 323.1L441 323.1L441 320.8L440 320.8L440 323.0L439 323.0L439 327.6L438 327.6L438 325.7L437 325.7L437 324.1L436 324.1L436 321.7L435 321.7L435 320.8L434 320.8L434 327.7L433 327.7L433 320.7L432 320.7L432 322.8L431 322.8L431 324.4L430 324.4L430 321.4L429 321.4L429 327.3L428 327.3L428 329.4L427 329.4L427 328.2L426 328.2L426 325.7L425 325.7L425 330.9L424 330.9L424 321.6L423 321.6L423 321.7L422 321.7L422 322.5L421 322.5L421 324.0L420 324.0L420 330.2L419 330.2L419 325.2L418 325.2L418 328.9L417 328.9L417 322.7L416 322.7L416 325.0L415 325.0L415 327.7L414 327.7L414 322.8L413 322.8L413 333.7L412 333.7L412 338.0L411 338.0L411 323.8L410 323.8L410 322.2L409 322.2L409 320.8L408 320.8L408 324.7L407 324.7L407 329.5L406 329.5L406 326.8L405 326.8L405 326.9L404 326.9L404 325.4L403 325.4L403 327.4L402 327.4L402 323.2L401 323.2L401 331.6L400 331.6L400 326.2L399 326.2L399 328.8L398 328.8L398 331.3L397 331.3L397 324.0L396 324.0L396 323.2L395 323.2L395 325.2L394 325.2L394 328.8L393 328.8L393 329.6L392 329.6L392 330.4L391 330.4L391 324.2L390 324.2L390 330.5L389 330.5L389 329.5L388 329.5L388 323.1L387 323.1L387 335.1L386 335.1L386 331.0L385 331.0L385 321.8L384 321.8L384 321.4L383 321.4L383 331.6L382 331.6L382 322.4L381 322.4L381 330.5L380 330.5L380 329.5L379 329.5L379 327.5L378 327.5L378 322.6L377 322.6L377 322.3L376 322.3L376 330.0L375 330.0L375 322.8L374 322.8L374 332.3L373 332.3L373 322.4L372 322.4L372 323.9L371 323.9L371 324.2L370 324.2L370 321.4L369 321.4L369 332.1L368 332.1L368 330.3L367 330.3L367 324.5L366 324.5L366 323.0L365 323.0L365 327.7L364 327.7L364 320.7L363 320.7L363 326.8L362 326.8L362 323.8L361 323.8L361 322.1L360 322.1L360 322.3L359 322.3L359 325.5L358 325.5L358 328.9L357 328.9L357 326.7L356 326.7L356 322.1L355 322.1L355 321.7L354 321.7L354 331.4L353 331.4L353 322.0L352 322.0L352 327.6L351 327.6L351 329.9L350 329.9L350 331.9L349 331.9L349 324.3L348 324.3L348 322.8L347 322.8L347 327.5L346 327.5L346 321.2L345 321.2L345 321.4L344 321.4L344 321.7L343 321.7L343 324.4L342 324.4L342 323.1L341 323.1L341 334.0L340 334.0L340 328.6L339 328.6L339 328.9L338 328.9L338 329.1L337 329.1L337 321.8L336 321.8L336 320.5L335 320.5L335 332.5L334 332.5L334 326.9L333 326.9L333 325.1L332 325.1L332 321.0L331 321.0L331 324.1L330 324.1L330 327.4L329 327.4L329 324.2L328 324.2L328 322.4L327 322.4L327 321.3L326 321.3L326 321.6L325 321.6L325 328.2L324 328.2L324 325.9L323 325.9L323 326.7L322 326.7L322 330.9L321 330.9L321 325.4L320 325.4L320 323.5L319 323.5L319 325.4L318 325.4L318 326.9L317 326.9L317 328.1L316 328.1L316 326.4L315 326.4L315 323.1L314 323.1L314 323.4L313 323.4L313 320.4L312 320.4L312 332.9L311 332.9L311 321.7L310 321.7L310 321.7L309 321.7L309 322.1L308 322.1L308 320.7L307 320.7L307 328.2L306 328.2L306 321.7L305 321.7L305 329.4L304 329.4L304 327.1L303 327.1L303 321.1L302 321.1L302 321.8L301 321.8L301 324.0L300 324.0L300 320.0L299 320.0L299 324.2L298 324.2L298 320.1L297 320.1L297 333.1L296 333.1L296 322.8L295 322.8L295 320.7L294 320.7L294 320.8L293 320.8L293 321.1L292 321.1L292 324.7L291 324.7L291 322.0L290 322.0L290 319.8L289 319.8L289 322.9L288 322.9L288 319.8L287 319.8L287 323.7L286 323.7L286 320.0L285 320.0L285 324.5L284 324.5L284 331.3L283 331.3L283 322.9L282 322.9L282 331.4L281 331.4L281 323.9L280 323.9L280 324.0L279 324.0L279 322.0L278 322.0L278 321.9L277 321.9L277 326.8L276 326.8L276 324.6L275 324.6L275 320.1L274 320.1L274 320.2L273 320.2L273 319.9L272 319.9L272 323.3L271 323.3L271 320.2L270 320.2L270 320.1L269 320.1L269 329.1L268 329.1L268 320.1L267 320.1L267 322.0L266 322.0L266 322.8L265 322.8L265 326.7L264 326.7L264 324.4L263 324.4L263 322.4L262 322.4L262 326.5L261 326.5L261 328.4L260 328.4L260 320.5L259 320.5L259 327.0L258 327.0L258 320.1L257 320.1L257 320.9L256 320.9L256 322.7L255 322.7L255 325.8L254 325.8L254 322.1L253 322.1L253 320.2L252 320.2L252 328.4L251 328.4L251 321.3L250 321.3L250 323.9L249 323.9L249 320.0L248 320.0L248 320.6L247 320.6L247 325.3L246 325.3L246 328.4L245 328.4L245 321.4L244 321.4L244 320.5L243 320.5L243 320.1L242 320.1L242 319.7L241 319.7L241 329.0L240 329.0L240 320.9L239 320.9L239 324.7L238 324.7L238 323.4L237 323.4L237 325.4L236 325.4L236 321.6L235 321.6L235 324.2L234 324.2L234 321.7L233 321.7L233 322.2L232 322.2L232 322.5L231 322.5L231 322.5L230 322.5L230 321.1L229 321.1L229 320.5L228 320.5L228 325.8L227 325.8L227 327.8L226 327.8L226 322.6L225 322.6L225 327.2L224 327.2L224 319.8L223 319.8L223 322.3L222 322.3L222 320.1L221 320.1L221 325.8L220 325.8L220 327.5L219 327.5L219 321.8L218 321.8L218 320.3L217 320.3L217 320.7L216 320.7L216 321.7L215 321.7L215 325.8L214 325.8L214 321.9L213 321.9L213 323.8L212 323.8L212 325.4L211 325.4L211 320.6L210 320.6L210 319.8L209 319.8L209 326.6L208 326.6L208 321.3L207 321.3L207 324.0L206 324.0L206 333.1L205 333.1L205 322.5L204 322.5L204 321.6L203 321.6L203 328.6L202 328.6L202 325.1L201 325.1L201 323.6L200 323.6L200 330.6L199 330.6L199 323.9L198 323.9L198 321.2L197 321.2L197 325.9L196 325.9L196 321.1L195 321.1L195 322.5L194 322.5L194 324.5L193 324.5L193 328.2L192 328.2L192 323.4L191 323.4L191 325.3L190 325.3L190 325.0L189 325.0L189 323.1L188 323.1L188 326.9L187 326.9L187 325.5L186 325.5L186 322.3L185 322.3L185 329.2L184 329.2L184 327.4L183 327.4L183 320.5L182 320.5L182 321.1L181 321.1L181 323.6L180 323.6L180 326.4L179 326.4L179 322.8L178 322.8L178 326.6L177 326.6L177 320.8L176 320.8L176 321.7L175 321.7L175 323.9L174 323.9L174 322.1L173 322.1L173 320.8L172 320.8L172 320.9L171 320.9L171 320.5L170 320.5L170 320.4L169 320.4L169 321.7L168 321.7L168 321.0L167 321.0L167 326.5L166 326.5L166 321.9L165 321.9L165 326.3L164 326.3L164 321.9L163 321.9L163 324.5L162 324.5L162 326.3L161 326.3L161 321.1L160 321.1L160 328.1L159 328.1L159 329.8L158 329.8L158 323.3L157 323.3L157 321.4L156 321.4L156 328.5L155 328.5L155 324.6L154 324.6L154 322.9L153 322.9L153 323.0L152 323.0L152 338.9L151 338.9L151 322.9L150 322.9L150 326.7L149 326.7L149 324.7L148 324.7L148 325.5L147 325.5L147 323.5L146 323.5L146 322.6L145 322.6L145 324.6L144 324.6L144 328.7L143 328.7L143 333.4L142 333.4L142 322.6L141 322.6L141 324.8L140 324.8L140 322.1L139 322.1L139 325.3L138 325.3L138 323.0L137 323.0L137 326.2L136 326.2L136 328.9L135 328.9L135 322.8L134 322.8L134 326.5L133 326.5L133 324.6L132 324.6L132 325.8L131 325.8L131 324.7L130 324.7L130 326.4L129 326.4L129 331.2L128 331.2L128 334.1L127 334.1L127 323.0L126 323.0L126 330.6L125 330.6L125 323.5L124 323.5L124 321.9L123 321.9L123 326.1L122 326.1L122 322.3L121 322.3L121 321.6L120 321.6L120 321.6L119 321.6L119 321.8L118 321.8L118 324.2L117 324.2L117 326.7L116 326.7L116 322.4L115 322.4L115 321.2L114 321.2L114 325.4L113 325.4L113 322.4L112 322.4L112 332.3L111 332.3L111 322.8L110 322.8L110 320.1L109 320.1L109 320.3L108 320.3L108 322.3L107 322.3L107 323.0L106 323.0L106 322.2L105 322.2L105 326.4L104 326.4L104 325.0L103 325.0L103 322.1L102 322.1L102 321.8L101 321.8L101 321.1L100 321.1L100 321.7L99 321.7L99 321.7L98 321.7L98 325.5L97 325.5L97 325.6L96 325.6L96 321.9L95 321.9L95 323.1L94 323.1L94 327.4L93 327.4L93 323.4L92 323.4L92 319.4L91 319.4L91 324.1L90 324.1L90 319.7L89 319.7L89 323.2L88 323.2L88 322.3L87 322.3L87 321.1L86 321.1L86 321.1L85 321.1L85 320.1L84 320.1L84 321.4L83 321.4L83 325.7L82 325.7L82 325.2L81 325.2L81 324.9L80 324.9L80 320.8L79 320.8L79 323.7L78 323.7L78 327.1L77 327.1L77 321.3L76 321.3L76 320.6L75 320.6L75 323.7L74 323.7L74 320.6L73 320.6L73 326.4L72 326.4L72 323.9L71 323.9L71 322.9L70 322.9L70 319.9L69 319.9L69 320.1L68 320.1L68 321.2L67 321.2L67 323.9L66 323.9L66 320.6L65 320.6L65 320.5L64 320.5L64 329.1L63 329.1L63 324.0L62 324.0L62 322.6L61 322.6L61 323.8L60 323.8L60 321.6L59 321.6L59 317.1H47Z" fill="#2db56b"/>
 <rect x="97" y="218" width="1.6" height="193" fill="#f0a35e"/>
 <path d="M90 198H106V214L98 221L90 214Z" fill="#f0883c"/>
</svg>

<div class="a ts" style="left:8.5px"><span style="display:inline-block;width:9.05px;text-align:center">0</span><span style="display:inline-block;width:9.05px;text-align:center">0</span><span style="display:inline-block;width:9.05px;text-align:center">:</span><span style="display:inline-block;width:9.05px;text-align:center">0</span><span style="display:inline-block;width:9.05px;text-align:center">0</span><span style="display:inline-block;width:9.05px;text-align:center">:</span><span style="display:inline-block;width:9.05px;text-align:center">0</span><span style="display:inline-block;width:9.05px;text-align:center">0</span></div>
<div class="a ts" style="left:722px"><span style="display:inline-block;width:9.05px;text-align:center">0</span><span style="display:inline-block;width:9.05px;text-align:center">0</span><span style="display:inline-block;width:9.05px;text-align:center">:</span><span style="display:inline-block;width:9.05px;text-align:center">0</span><span style="display:inline-block;width:9.05px;text-align:center">0</span><span style="display:inline-block;width:9.05px;text-align:center">:</span><span style="display:inline-block;width:9.05px;text-align:center">0</span><span style="display:inline-block;width:9.05px;text-align:center">6</span><span style="display:inline-block;width:9.05px;text-align:left">.</span><span style="display:inline-block;width:9.05px;text-align:center">5</span><span style="display:inline-block;width:9.05px;text-align:center">6</span></div>
<div class="a ts" style="left:1404px"><span style="display:inline-block;width:9.05px;text-align:center">0</span><span style="display:inline-block;width:9.05px;text-align:center">0</span><span style="display:inline-block;width:9.05px;text-align:center">:</span><span style="display:inline-block;width:9.05px;text-align:center">0</span><span style="display:inline-block;width:9.05px;text-align:center">3</span><span style="display:inline-block;width:9.05px;text-align:center">:</span><span style="display:inline-block;width:9.05px;text-align:center">0</span><span style="display:inline-block;width:9.05px;text-align:center">0</span><span style="display:inline-block;width:9.05px;text-align:left">.</span><span style="display:inline-block;width:9.05px;text-align:center">0</span><span style="display:inline-block;width:9.05px;text-align:center">3</span></div>

<!-- controls row -->
<svg class="a" style="left:30px;top:498px" width="54" height="42" viewBox="0 0 54 42">
 <g fill="#2ab764"><rect x="6.1" y="9" width="25.1" height="3.9"/><rect x="6.1" y="16.9" width="25.1" height="3.9"/><rect x="6.1" y="24.8" width="16.9" height="4.1"/><rect x="27.1" y="24.8" width="20.5" height="4.1"/><rect x="35" y="16.9" width="3.9" height="20.6"/></g>
</svg>
<svg class="a" style="left:142px;top:498px" width="42" height="42" viewBox="0 0 42 42">
 <g fill="none" stroke="#2ab764" stroke-width="3"><circle cx="11" cy="11.85" r="4.5"/><circle cx="11" cy="30" r="4.5"/></g>
 <g fill="#2ab764"><path d="M13.5 16.2L16.8 13.2L35 31.5V34H30Z"/><path d="M21.5 17.2L24.6 19.5L35 9.4V7.4H30.7Z"/></g>
 <path d="M14.5 26L21 19.8" stroke="#2ab764" stroke-width="3.6"/>
 <rect x="19" y="20.1" width="1.8" height="1.8" fill="#fff"/>
</svg>
<div class="a" style="left:195px;top:506px;width:36px;height:27px;background:#2ab764;border-radius:3px"></div>
<div class="a tx" style="left:195px;top:512.61px;font-size:17px;line-height:17px;color:#fff;width:36px;text-align:center;">LP</div>
<div class="a" style="left:239px;top:503px;width:135px;height:33px;border:1px solid #dedede;box-shadow:1px 1px 0 #e9e9e9"></div>
<div class="a tx" style="left:252px;top:511.76px;font-size:18px;line-height:18px;color:#8e8e8e;letter-spacing:-0.2px;">00:00:00.00</div>
<svg class="a" style="left:359px;top:510px" width="11" height="20"><path d="M1.4 6.8L5.3 1.2L9.2 6.8Z M1.4 12.8L5.3 18.2L9.2 12.8Z" fill="#8a8fa0"/></svg>
<div class="a" style="left:389px;top:506px;width:36px;height:27px;background:#2ab764;border-radius:3px"></div>
<div class="a tx" style="left:389px;top:512.61px;font-size:17px;line-height:17px;color:#fff;width:36px;text-align:center;">RP</div>
<div class="a" style="left:433px;top:503px;width:135px;height:33px;border:1px solid #dedede;box-shadow:1px 1px 0 #e9e9e9"></div>
<div class="a tx" style="left:439px;top:511.76px;font-size:18px;line-height:18px;color:#8e8e8e;letter-spacing:-0.2px;">00:03:00.03</div>
<svg class="a" style="left:553px;top:510px" width="11" height="20"><path d="M1.4 6.8L5.3 1.2L9.2 6.8Z M1.4 12.8L5.3 18.2L9.2 12.8Z" fill="#8a8fa0"/></svg>

<div class="a tx" style="left:1101px;top:468.76px;font-size:18px;line-height:18px;color:#8c8c8c;">Master Of Puppets.mp3</div>

<svg class="a" style="left:0;top:0" width="1513" height="930">
 <g fill="#2ab764">
  <rect x="885" y="507" width="3.5" height="24"/>
  <rect x="896" y="517.2" width="17" height="3.4"/>
  <path d="M891.5 519L898 513.5V524.5Z"/>
  <rect x="938" y="517.3" width="24" height="3.4"/>
  <rect x="948.3" y="502" width="3.4" height="8"/><path d="M944 509H956L950 514.5Z"/>
  <rect x="948.3" y="528" width="3.4" height="8"/><path d="M944 529H956L950 523.5Z"/>
  <rect x="1011.5" y="507" width="3.5" height="24"/>
  <rect x="987" y="517.2" width="16" height="3.4"/>
  <path d="M1008.5 519L1002 513.5V524.5Z"/>
  <path d="M1052.5 519L1065.5 510V528Z M1066 519L1079 510V528Z"/>
  <rect x="1118" y="511" width="4" height="16"/><rect x="1126" y="511" width="4" height="16"/>
  <path d="M1169 510L1182 519L1169 528Z M1183 510L1196 519L1183 528Z"/>
  <path d="M1236 514.5H1242L1250 507V531L1242 523.5H1236Z"/>
  <path d="M1252.8 513A4.3 6 0 0 1 1252.8 525Z"/>
 </g>
 <circle cx="1124" cy="519" r="18" fill="none" stroke="#2ab764" stroke-width="3.8"/>
 <rect x="1277" y="516.5" width="75" height="5" fill="#fdeccb"/>
 <rect x="1277" y="518.5" width="75" height="1.5" fill="#f4a04e"/>
 <rect x="1352" y="516.5" width="75" height="5" fill="#cfeeda"/>
 <rect x="1352" y="518.5" width="75" height="1.5" fill="#2ab764"/>
 <circle cx="1352" cy="519" r="6" fill="#f5a455"/>
</svg>

<!-- export row -->
<div class="a" style="left:1078px;top:594px;width:135px;height:45px;background:#2ab764;border-radius:3px"></div>
<div class="a tx" style="left:1078.5px;top:607.65px;font-size:20.5px;line-height:20.5px;color:#fff;width:135px;text-align:center;letter-spacing:0.15px;">Export All</div>
<div class="a tx" style="left:1241px;top:610.19px;font-size:17.5px;line-height:17.5px;color:#2ab764;letter-spacing:-0.15px;text-decoration:underline;text-decoration-skip-ink:none;text-underline-offset:2px;">Clear All</div>
<div class="a tx" style="left:1344px;top:610.19px;font-size:17.5px;line-height:17.5px;color:#2ab764;text-decoration:underline;text-decoration-skip-ink:none;text-underline-offset:2px;">Open Folder</div>
<div class="a" style="left:2px;top:654px;width:1509px;height:2px;background:#ececec"></div>

<div class="a tx" style="left:31.5px;top:677.76px;font-size:18px;line-height:18px;color:#8e8e8e;letter-spacing:-0.5px;">Filename</div>
<div class="a tx" style="left:551px;top:677.76px;font-size:18px;line-height:18px;color:#8e8e8e;">Duration</div>
<div class="a tx" style="left:883px;top:677.76px;font-size:18px;line-height:18px;color:#8e8e8e;">Export progress</div>
<div class="a tx" style="left:1167px;top:677.76px;font-size:18px;line-height:18px;color:#8e8e8e;letter-spacing:-0.5px;">Size</div>
<div class="a tx" style="left:1331px;top:677.76px;font-size:18px;line-height:18px;color:#8e8e8e;letter-spacing:0.3px;">Options</div>
</body></html>
